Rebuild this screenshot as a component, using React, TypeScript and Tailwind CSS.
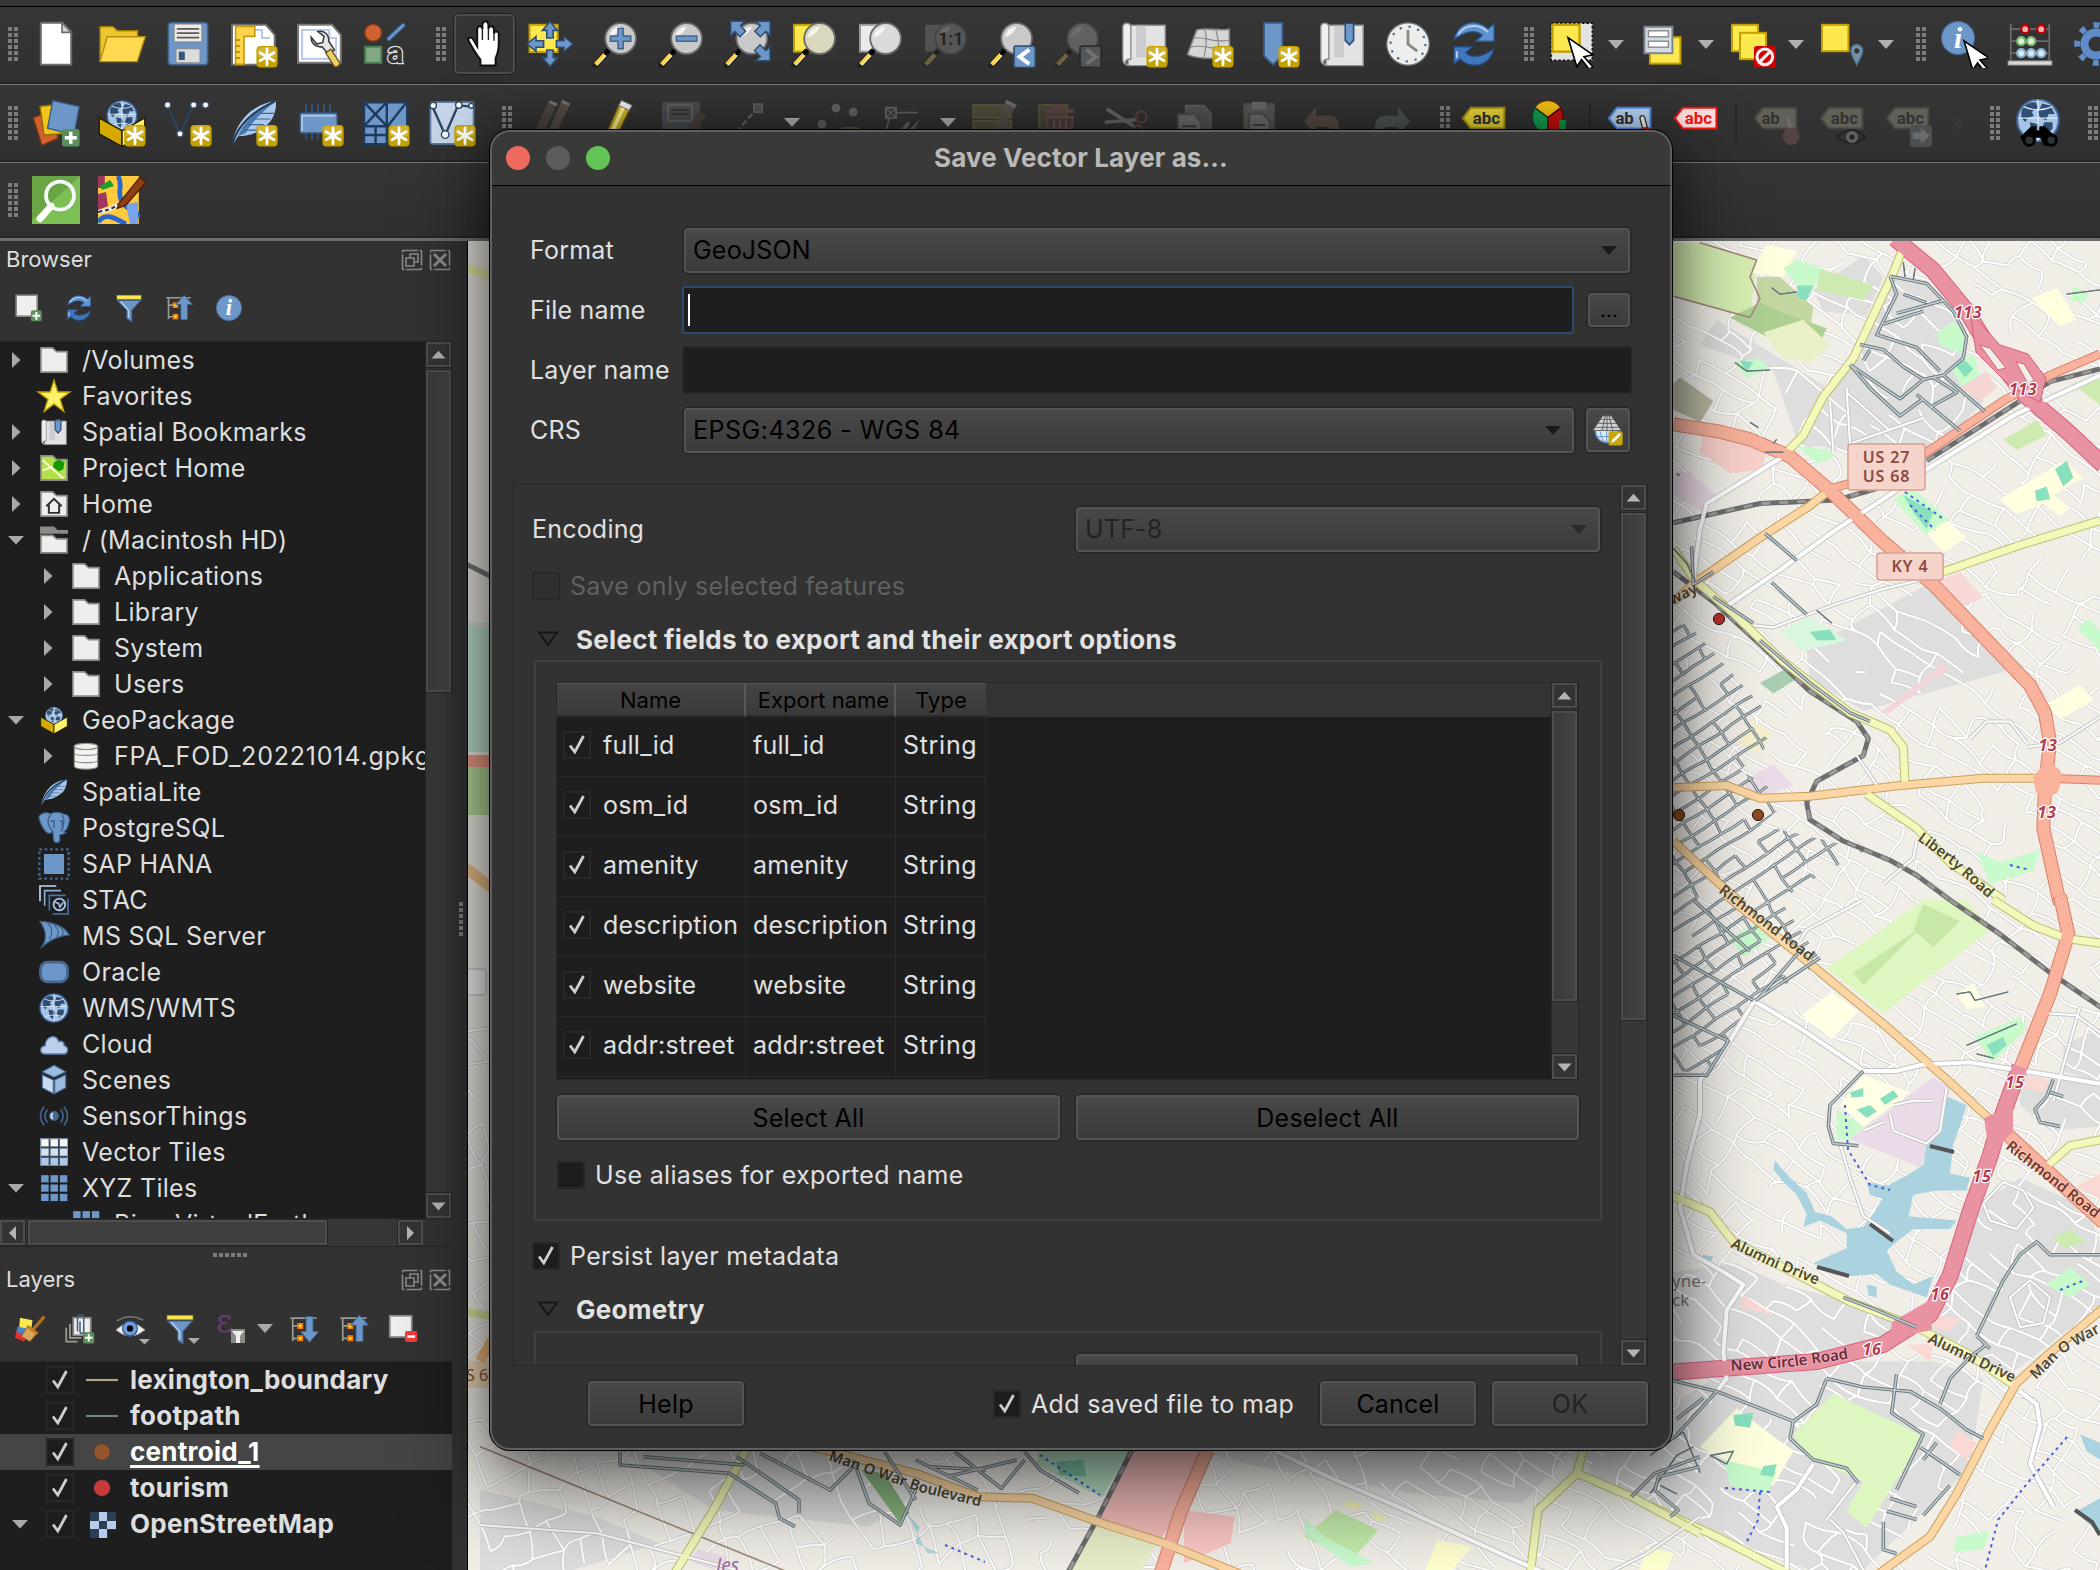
import React from "react";

type Kids = { children?: React.ReactNode };

/* ------------------------------------------------------------------ */
/* Icon helpers                                                        */
/* ------------------------------------------------------------------ */

const BLUE = "#6d97c8";
const NAVY = "#2f4e72";

function Svg({ children, size = 48, dim = false }: Kids & { size?: number; dim?: boolean }) {
  return (
    <svg width={size} height={size} viewBox="0 0 24 24" className={dim ? "block shrink-0 opacity-30" : "block shrink-0"}>
      {children}
    </svg>
  );
}

function Star() {
  return (
    <g>
      <rect x="13.2" y="13" width="10.6" height="10.8" rx="2" fill="#c4a000" />
      <rect x="13.8" y="13.6" width="9.4" height="5" rx="1.4" fill="#d3b431" />
      <path d="M18.5 14.4v8M15 16.4l7 4M22 16.4l-7 4" stroke="#fff" strokeWidth="1.4" strokeLinecap="round" />
    </g>
  );
}

function Lens({ fill = "#c9c9c9", x = 0 }: { fill?: string; x?: number }) {
  return (
    <g transform={`translate(${x} 0)`}>
      <path d="M1.6 22.6 7.6 16" stroke="#222" strokeWidth="3.2" strokeLinecap="round" />
      <path d="M1.8 22.2 6.4 17.2" stroke="#fcd24a" strokeWidth="2" />
      <path d="M2.6 22.6 7 17.8" stroke="#fff3c0" strokeWidth=".6" />
      <path d="M7 16.6 9.5 14" stroke="#000" strokeWidth="1.8" strokeLinecap="round" />
      <circle cx="14.3" cy="9.3" r="7.7" fill={fill} stroke="#6a6a6a" strokeWidth=".9" />
      <path d="M8.4 8.5a6 6 0 0 1 6-5.3c-1.4 2.8-3 4.6-6 5.3z" fill="#fff" opacity=".75" />
    </g>
  );
}

function Pointer({ x = 0, y = 0 }: { x?: number; y?: number }) {
  return (
    <path
      transform={`translate(${x} ${y})`}
      d="M0 0 12.5 8.6 8 9.6 12.4 14.6 10.6 15.9 6.8 11 4.4 14.6z"
      fill="#fff"
      stroke="#000"
      strokeWidth=".8"
    />
  );
}

function GlobeArt({ cx = 12, cy = 12, r = 10 }: { cx?: number; cy?: number; r?: number }) {
  const s = r / 10;
  return (
    <g transform={`translate(${cx} ${cy}) scale(${s})`}>
      <circle r="10" fill="#a5c4e8" stroke="#3f6699" strokeWidth="1" />
      <path d="M-8-4C-7-8-3-9-1-8.5L0-6l-3 2 1 2-3 1-1 2-2-2zM-4 1l4 1 1 2-2 4-2-2zM2-8l4 1 2 4-3 0-1 3-3-1-1-3zM3 1l4 0 0 3-3 3-2-3z" fill="#2f4e72" />
      <path d="M-9.6-1h19.2M0-10v20M-7-6.5q7 3 14 0M-7 6.5q7-3 14 0" stroke="#dbe8f7" strokeWidth=".6" fill="none" />
    </g>
  );
}

function RefreshArt() {
  return (
    <g>
      <path d="M2.2 9.5C3.2 4.6 7 1.4 11.5 1.4c3.3 0 5.7 1.3 7.4 3.2L22 2v8.6h-9l3.2-3c-1.2-1.2-2.8-1.8-4.7-1.8-3.3 0-6.3 1.5-9.3 3.7z" fill="#5f92d1" stroke="#2a5b9c" strokeWidth=".6" />
      <path d="M21.8 14.5c-1 4.9-4.8 8.1-9.3 8.1-3.3 0-5.7-1.3-7.4-3.2L2 22v-8.6h9l-3.2 3c1.2 1.2 2.8 1.8 4.7 1.8 3.3 0 6.3-1.5 9.3-3.7z" fill="#3f77bd" stroke="#23508c" strokeWidth=".6" />
      <path d="M4 7.4C6 4.2 9 3 12 3s5 1 7 3" stroke="#b7d0ee" strokeWidth="1" fill="none" />
      <path d="M3.4 15.6 3.4 19" stroke="#b7d0ee" strokeWidth="1" fill="none" />
    </g>
  );
}

function InfoArt({ cx = 12, cy = 12, r = 10 }: { cx?: number; cy?: number; r?: number }) {
  return (
    <g>
      <circle cx={cx} cy={cy} r={r} fill={BLUE} stroke="#4a709c" strokeWidth=".6" />
      <text x={cx} y={cy + r * 0.58} fontSize={r * 1.8} textAnchor="middle" fontStyle="italic" fontWeight="700" fontFamily="'Liberation Serif', serif" fill="#fff">
        i
      </text>
    </g>
  );
}

function QuillArt() {
  return (
    <g>
      <path d="M1 23.5C1.6 18 4 12.6 8 8.4 12 4 17.4 1.8 23 1c.2 5-1.2 9.4-5.2 12.6C14 17 9 18.6 4 18.6z" fill="#a9c8ec" />
      <path d="M23 1C14 5 7 11 4 18.6L8 17c2-4 5-8 15-16z" fill="#4c78ad" />
      <path d="M1 23.5C3 15 9 7 22.6 1.2" stroke="#1d3a5c" strokeWidth="1" fill="none" />
      <path d="M7 15.6h7M9 12.8h8M12 10h8M15 7.2h7" stroke="#3f6699" strokeWidth=".6" />
    </g>
  );
}

function FunnelArt() {
  return (
    <g>
      <path d="M2 5.6h20l-7.6 8.2V24l-4.2-3V13.8z" fill={BLUE} stroke="#41628a" strokeWidth=".9" />
      <path d="M5 6.6 11.6 14v6.4" stroke="#b5cde9" strokeWidth="1.2" fill="none" />
      <rect x="1.6" y="1" width="20.8" height="3.6" fill="#fce94f" stroke="#8d7b1a" strokeWidth=".5" />
    </g>
  );
}

function TreeArrowArt({ up }: { up?: boolean }) {
  return (
    <g>
      <path d="M1 3.2h21M3 3v18.5M3 9.5h5M3 19.5h5" stroke="#9a9a95" strokeWidth="1.4" fill="none" />
      <rect x="6.6" y="7.2" width="4.8" height="4.8" fill="#f57900" />
      <rect x="8" y="8.6" width="2" height="2" fill="#fce94f" />
      <rect x="6.6" y="17" width="4.8" height="4.8" fill="#f57900" />
      <rect x="8" y="18.4" width="2" height="2" fill="#fce94f" />
      {up ? (
        <path d="M16.4 1 23.6 9h-4.4v13h-5.6V9H9.2z" fill={BLUE} stroke="#3f6187" strokeWidth=".8" />
      ) : (
        <path d="M16.4 22.6 23.8 14h-4.6V2h-5.6v12H9.2z" fill={BLUE} stroke="#3f6187" strokeWidth=".8" />
      )}
    </g>
  );
}

function BookArt() {
  return (
    <g>
      <path d="M4 2.6h18.6v20.2H4z" fill="#e3e3e3" stroke="#8d8d8d" strokeWidth=".7" />
      <path d="M8 2.6h5v16H8z" fill="#bcbcc0" opacity=".55" />
      <path d="M1.4 3.6C1.4 1 5.4 1 5.4 3.6v16h-1C2 19.6 2.4 22.8 5 22.8c-2.6 0-3.6-1.4-3.6-3.4z" fill="#f0f0f0" stroke="#8d8d8d" strokeWidth=".7" />
    </g>
  );
}

function BoxGlobe() {
  return (
    <g>
      <GlobeArt cx={12} cy={8.4} r={7.4} />
      <path d="M.6 9.4 12 15.8v8L.6 17.4z" fill="#d4a900" stroke="#211a00" strokeWidth=".7" />
      <path d="M23.4 9.4 12 15.8v8l11.4-6.4z" fill="#fdf36b" stroke="#211a00" strokeWidth=".7" />
    </g>
  );
}

function Tag({ text, fill, stroke, color = "#333" }: { text: string; fill: string; stroke: string; color?: string }) {
  return (
    <g>
      <path d="M1.4 9.6 5.4 4.4h16.8v10.4H5.4z" fill={fill} stroke={stroke} strokeWidth="1" />
      <text x={text === "ab" ? 9.3 : 13.2} y="12.6" fontSize="8.4" textAnchor="middle" fontWeight="700" fontFamily="Roboto, sans-serif" fill={color}>
        {text}
      </text>
    </g>
  );
}

/* ------------------------------------------------------------------ */
/* Toolbar icons                                                       */
/* ------------------------------------------------------------------ */

const I = {
  newFile: (
    <Svg>
      <path d="M4.4 1.4h10.8l4.4 4.6v16.4H4.4z" fill="#fff" stroke="#6b6b6b" strokeWidth="1" />
      <path d="M15 1.4V6.2h4.6z" fill="#d5d5d5" stroke="#6b6b6b" strokeWidth=".8" />
    </Svg>
  ),
  folder: (
    <Svg>
      <path d="M1 20.6V3.4h6.4L9.8 5.4h10v4" fill="#edc62d" stroke="#a4800a" strokeWidth=".7" />
      <path d="M1 20.8 4.6 8.4h19L19.6 20.8z" fill="#ffd950" stroke="#b58e12" strokeWidth=".7" />
    </Svg>
  ),
  save: (
    <Svg>
      <rect x="2.2" y="1.4" width="19.6" height="21" rx="1.6" fill={BLUE} stroke="#45668f" strokeWidth=".8" />
      <rect x="5" y="2" width="14" height="9" rx=".8" fill="#eceae6" stroke="#7a7a7a" strokeWidth=".5" />
      <path d="M6.4 4.4h11.2M6.4 6.6h11.2M6.4 8.8h11.2" stroke="#5a5a5a" strokeWidth=".9" />
      <rect x="6" y="14.4" width="12" height="7" fill="#dcdcda" stroke="#8a8a8a" strokeWidth=".5" />
      <rect x="7.4" y="15.8" width="3" height="4.2" fill="#34567f" />
    </Svg>
  ),
  layout: (
    <Svg>
      <path d="M1 2.4h17l4.4 5v15H1z" fill="#fff" stroke="#6b6b6b" strokeWidth="1" />
      <path d="M3 5h13v4h4" fill="none" stroke="#b6c9ec" strokeWidth="1" />
      <path d="M2.8 3.2h9.6v5H7v14H2.8z" fill="#ffd44b" stroke="#c29a10" strokeWidth=".8" />
      <path d="M3 10h2M3 13h2M3 16h2M3 19h2" stroke="#a17c00" strokeWidth=".7" />
      <Star />
    </Svg>
  ),
  wrench: (
    <Svg>
      <path d="M1 2.4h17l4.4 5v14H1z" fill="#fff" stroke="#777" strokeWidth="1" />
      <path d="M3 5h13.6v4H20v10.4H3z" fill="none" stroke="#b9cbee" strokeWidth="1.1" />
      <path d="M7.6 8.6 10.4 12l3-.8.6-3-3-2.4c3-.8 5.6 1.400 5.400 4.800l2.800 4.400-3 2-3.200-3.600c-3 .4-5.400-1.600-5.400-4.800z" fill="#e4e4e4" stroke="#3c3c3c" strokeWidth=".8" />
      <path d="M14.8 16.4 17.4 14.600 22 21.600c-.4 1.600-2 2.200-3 1.400z" fill="#e8cf6b" stroke="#6e5a16" strokeWidth=".7" />
    </Svg>
  ),
  style: (
    <Svg>
      <ellipse cx="5.6" cy="6.4" rx="4.2" ry="4.2" fill="#cf6230" stroke="#8c3d17" strokeWidth=".7" />
      <path d="M13.4 9.4 20.6 2.6" stroke="#34567f" strokeWidth="2.6" strokeLinecap="round" />
      <path d="M13.4 9.4 20.6 2.6" stroke={BLUE} strokeWidth="1.4" strokeLinecap="round" />
      <rect x="1.6" y="13.4" width="8" height="8" fill="#83a883" stroke="#4c8353" strokeWidth="1" />
      <text x="16.6" y="21.6" fontSize="15" textAnchor="middle" fontFamily="Roboto, sans-serif" fontWeight="700" fill="#333" stroke="#dedede" strokeWidth="1.3" paintOrder="stroke">
        a
      </text>
    </Svg>
  ),
  hand: (
    <Svg>
      <path
        d="M8.6 13.2V4.6c0-2 2.4-2 2.6 0V2.4c0-2.4 3-2.4 3 0v2c.2-1.8 2.6-1.6 2.8.2v2.2c.2-1.6 2.4-1.4 2.4.4 0 5 .2 8.2-1.6 12v3.6H10.2v-3C8 17 6 13.6 4.4 10.6c-.8-1.8.8-2.4 2-1.2z"
        fill="#fff"
        stroke="#111"
        strokeWidth="1"
      />
      <path d="M11.2 10V4M14.2 10V4.4M17 10.4V6.4" stroke="#222" strokeWidth=".7" />
    </Svg>
  ),
  panSel: (
    <Svg>
      <rect x="1.8" y="2.4" width="14" height="13.6" fill="#fce94f" stroke="#c4a000" strokeWidth="1" />
      <path d="M12 .8 15.8 5.2H13.6V9h-3.2V5.2H8.2zM12 23.2 15.8 18.8H13.6V15h-3.2v3.8H8.2zM.6 12 5 8.2v2.2h3.8v3.2H5v2.2zM23.4 12 19 8.2v2.2h-3.8v3.2H19v2.2z" fill={BLUE} stroke={NAVY} strokeWidth=".8" />
    </Svg>
  ),
  zoomIn: (
    <Svg>
      <Lens />
      <path d="M13 4.2h2.6V8h3.8v2.6h-3.8v3.8H13v-3.8H9.2V8H13z" fill={BLUE} stroke="#41628a" strokeWidth=".7" />
    </Svg>
  ),
  zoomOut: (
    <Svg>
      <Lens />
      <rect x="9.2" y="8" width="10.2" height="2.6" fill={BLUE} stroke="#41628a" strokeWidth=".7" />
    </Svg>
  ),
  zoomFull: (
    <Svg>
      <Lens x={-0.4} />
      <path d="M3.4.6h7L8.2 2.8l2.6 2.8-2.8 2.8L5.4 5.6 3.4 7.800zM23 .6h-7l2.2 2.2-2.8 2.8 2.8 2.8L21 5.600l2 2.200zM23 20.400h-7l2.200-2.200-3-3 2.800-2.800 3 3 2-2.200z" fill={BLUE} stroke={NAVY} strokeWidth=".7" />
    </Svg>
  ),
  zoomSel: (
    <Svg>
      <rect x="2" y="2.4" width="11" height="13.4" fill="#fce94f" stroke="#c4a000" strokeWidth="1" />
      <Lens fill="#d9d7bc" x={0.5} />
    </Svg>
  ),
  zoomLayer: (
    <Svg>
      <rect x="2" y="2.4" width="11" height="13.4" fill="#ebebeb" stroke="#999" strokeWidth="1" />
      <Lens fill="#dadada" x={0.5} />
    </Svg>
  ),
  zoomNative: (
    <Svg dim>
      <rect x="1.6" y="2.4" width="11" height="13.4" fill="#999" />
      <Lens fill="#a9a9a9" />
      <text x="14.4" y="12.6" fontSize="9" textAnchor="middle" fontWeight="700" fontFamily="Roboto, sans-serif" fill="#000">
        1:1
      </text>
    </Svg>
  ),
  zoomLast: (
    <Svg>
      <Lens />
      <rect x="13" y="13" width="10.6" height="10.8" rx="1" fill={BLUE} stroke="#2c4c75" strokeWidth=".8" />
      <path d="M20.6 14.8 15.8 18.4 20.6 22" stroke="#fff" strokeWidth="2" fill="none" />
    </Svg>
  ),
  zoomNext: (
    <Svg dim>
      <Lens />
      <rect x="13" y="13" width="10.6" height="10.8" rx="1" fill="#9aa5b5" stroke="#111" strokeWidth=".8" />
      <path d="M16.2 14.8 21 18.4 16.2 22" stroke="#fff" strokeWidth="2" fill="none" />
    </Svg>
  ),
  newMap: (
    <Svg>
      <BookArt />
      <Star />
    </Svg>
  ),
  new3d: (
    <Svg>
      <path d="M5.4 5C10 3.6 16 5.6 21.6 4.6L21.8 20C16 18 7 20.6.8 17.2z" fill="#d6d6d6" stroke="#888" strokeWidth=".8" />
      <path d="M9 4.4c2 4 1 9 0 14M15 5c1 4 2 10 1 14M4 9c6-1 10 3 18 1M2 13.6c7-2 12 2 20 1" stroke="#8a8a8a" strokeWidth=".6" fill="none" />
      <Star />
    </Svg>
  ),
  newBookmark: (
    <Svg>
      <path d="M6 1.4h9.2v16L10.6 22.4 6 18z" fill={BLUE} stroke="#3b5d89" strokeWidth=".9" />
      <Star />
    </Svg>
  ),
  bookmarks: (
    <Svg>
      <BookArt />
      <path d="M13.6 1.6h4.2v8.6l-2.1 2.2-2.1-2.2z" fill={BLUE} stroke="#2c4c75" strokeWidth=".8" />
    </Svg>
  ),
  clock: (
    <Svg>
      <circle cx="12" cy="12" r="10.6" fill="#eeeeec" stroke="#777" strokeWidth=".6" />
      <circle cx="12" cy="12" r="8.7" fill="none" stroke="#41688f" strokeWidth="1.1" strokeDasharray="1.1 3.456" />
      <path d="M12 5v7l4.6 3.6" stroke="#8a8a82" strokeWidth="1.4" fill="none" />
    </Svg>
  ),
  refresh: (
    <Svg>
      <RefreshArt />
    </Svg>
  ),
  select: (
    <Svg>
      <rect x="1.6" y="1.6" width="20.6" height="18.6" fill="#e2e2e0" stroke="#111" strokeWidth=".9" strokeDasharray="1.2 1" />
      <rect x="2.2" y="2.4" width="13.6" height="13.4" fill="#fce94f" stroke="#c4a000" strokeWidth="1.2" />
      <Pointer x={10} y={8.8} />
    </Svg>
  ),
  selectForm: (
    <Svg>
      <rect x="6" y="8.6" width="15.2" height="13.2" fill="#fce94f" stroke="#c4a000" strokeWidth="1" />
      <rect x="3.2" y="3.4" width="14" height="13.2" fill="#d7dde7" stroke="#7d8590" strokeWidth="1" />
      <rect x="5.2" y="5.4" width="10" height="3" fill="#fff" stroke="#888" strokeWidth=".7" />
      <rect x="5.2" y="10.6" width="10" height="3" fill="#fff" stroke="#888" strokeWidth=".7" />
    </Svg>
  ),
  deselect: (
    <Svg>
      <rect x="2" y="2.4" width="13" height="13.2" fill="#fce94f" stroke="#c4a000" strokeWidth="1" />
      <rect x="6" y="6.4" width="13" height="13.2" fill="#fce94f" stroke="#c4a000" strokeWidth="1" />
      <rect x="13" y="13" width="10.8" height="10.8" rx="1.4" fill="#d40000" />
      <circle cx="18.4" cy="18.4" r="3.9" fill="none" stroke="#eee" strokeWidth="1.6" />
      <path d="M15.8 21 21 15.8" stroke="#eee" strokeWidth="1.6" />
    </Svg>
  ),
  selectLoc: (
    <Svg>
      <rect x="2" y="2.4" width="13.2" height="13.2" fill="#fce94f" stroke="#c4a000" strokeWidth="1" />
      <path d="M19.4 22.6C17.4 18.6 16.4 17 16.4 15.2a3 3 0 0 1 6 0c0 1.8-1 3.4-3 7.4z" fill="#7291a8" stroke="#4e6a80" strokeWidth=".7" />
      <circle cx="19.4" cy="15.4" r="1.3" fill="#333" />
    </Svg>
  ),
  identify: (
    <Svg>
      <InfoArt cx={9} cy={9} r={8.2} />
      <Pointer x={12} y={10.4} />
    </Svg>
  ),
  abacus: (
    <Svg>
      <path d="M2.4 2v18M21.6 2v18M2.4 4.6h19.2M2.4 10.6h19.2M2.4 16.6h19.2" stroke="#6a6a6a" strokeWidth=".9" />
      <rect x="1" y="20.4" width="22" height="2.2" fill="#d8d8d8" stroke="#777" strokeWidth=".5" />
      <g strokeWidth="1.1">
        <circle cx="9.6" cy="4.6" r="2" fill="#f0b0b0" stroke="#b00" />
        <circle cx="17.6" cy="4.6" r="2" fill="#f0b0b0" stroke="#b00" />
        <circle cx="7.6" cy="10.6" r="2" fill="#d8f5d0" stroke="#7cb574" />
        <circle cx="12.6" cy="10.6" r="2" fill="#d8f5d0" stroke="#7cb574" />
        <circle cx="7.6" cy="16.6" r="2" fill="#d7e9f5" stroke="#88b1cc" />
        <circle cx="12.6" cy="16.6" r="2" fill="#d7e9f5" stroke="#88b1cc" />
        <circle cx="17.6" cy="16.6" r="2" fill="#d7e9f5" stroke="#88b1cc" />
      </g>
    </Svg>
  ),
  gear: (
    <Svg>
      <circle cx="12" cy="12" r="9.4" fill="none" stroke="#5d8cc9" strokeWidth="3" strokeDasharray="3 4.38" strokeDashoffset="1.5" />
      <circle cx="12" cy="12" r="5.8" fill="none" stroke="#5d8cc9" strokeWidth="4" />
    </Svg>
  ),
  dataSource: (
    <Svg>
      <path d="M.6 9.4 9 6l4 13.6-8 3.6z" fill="#cf6230" stroke="#84350f" strokeWidth=".7" />
      <path d="M4 3.6 14 2.6l1 14.8-9 .6z" fill="#f3c518" stroke="#8f6e00" strokeWidth=".7" />
      <path d="M10.4.8 23.6 3.8 21 18 7.8 14.6z" fill={BLUE} stroke="#3a5c88" strokeWidth=".7" />
      <rect x="15" y="15" width="8.8" height="8.8" rx="1.4" fill="#5b8e5d" />
      <path d="M19.4 16.4v6M16.4 19.4h6" stroke="#fff" strokeWidth="1.7" />
    </Svg>
  ),
  geopackage: (
    <Svg>
      <BoxGlobe />
      <Star />
    </Svg>
  ),
  shapefile: (
    <Svg>
      <path d="M1.8 3 8 17.6 14.8 3H20.6" fill="none" stroke="#2b4059" strokeWidth="1.3" />
      <g fill="#fff" stroke="#445a75" strokeWidth=".6">
        <circle cx="1.8" cy="3" r="1.5" />
        <circle cx="8" cy="17.4" r="1.5" />
        <circle cx="14.8" cy="3" r="1.5" />
        <circle cx="20.8" cy="3" r="1.5" />
      </g>
      <Star />
    </Svg>
  ),
  spatialite: (
    <Svg>
      <QuillArt />
      <Star />
    </Svg>
  ),
  memory: (
    <Svg>
      <path d="M5 7V2.6M8 7V2.6M11 7V2.6M14 7V2.6M17 7V2.6M5 16v4.2M8 16v4.2M11 16v4.2M14 16v4.2" stroke="#34567f" strokeWidth=".9" />
      <rect x="2" y="7" width="18.6" height="10" rx="1" fill={BLUE} stroke="#34567f" strokeWidth=".8" />
      <path d="M3 16V8.4h16.6" stroke="#a8c3e4" strokeWidth="1" fill="none" />
      <Star />
    </Svg>
  ),
  mesh: (
    <Svg>
      <path d="M1 1.6h21.6v12H12.4v9H1z" fill={BLUE} stroke="#1e3a5c" strokeWidth="1.2" />
      <path d="M1 13.6h21M12.4 1.6v12M1 1.6l11.4 12M12.4 1.6 1 13.6M22 2 13 13.4M6.8 14v8.6M1 18h11.4" stroke="#1e3a5c" strokeWidth="1.2" fill="none" />
      <Star />
    </Svg>
  ),
  virtual: (
    <Svg>
      <rect x="1.2" y="1.6" width="21.6" height="20.8" rx="1" fill="#c7d6ea" stroke="#5b7ba5" strokeWidth=".9" />
      <path d="M2 3.2 8.6 18 15 3.2l7 .6" fill="none" stroke="#2e4763" strokeWidth="1.2" />
      <g fill="#fff" stroke="#2e4763" strokeWidth=".7">
        <circle cx="2.6" cy="3.2" r="1.6" />
        <circle cx="8.6" cy="17.8" r="1.9" />
        <circle cx="15.4" cy="3" r="1.6" />
        <circle cx="21.6" cy="3.4" r="1.2" />
      </g>
      <Star />
    </Svg>
  ),
  pencils: (
    <Svg dim>
      <path d="M3 19 11 1.6 15 3.2 7 21z" fill="#8a7062" />
      <path d="M10 19 17.4 1.6 21.6 3.6 13 21z" fill="#a08373" />
      <path d="m11 1.6 1-1 4 1.8-1 1.2zM17.4 1.6l.8-1.2L22 2.2l-.6 1.4z" fill="#fff" />
    </Svg>
  ),
  pencil: (
    <Svg>
      <path d="M6 20 13.4 3.2 18.6 5.6 10.6 22z" fill="#c9b52a" stroke="#6e6110" strokeWidth=".7" />
      <path d="M9 18.6 15.6 4.4" stroke="#fbf38a" strokeWidth="1.8" />
      <path d="m13.4 3.2 1.4-2.4 5.2 2.4-1.4 2.4z" fill="#eee" stroke="#888" strokeWidth=".5" />
    </Svg>
  ),
  saveEdits: (
    <Svg dim>
      <rect x="2" y="1.4" width="19" height="21" rx="1.6" fill="#7d8896" />
      <rect x="5" y="3" width="12" height="8" fill="#888" stroke="#ccc" strokeWidth=".8" />
      <path d="M6.4 5.4h9M6.4 7.6h9" stroke="#333" strokeWidth=".9" />
      <path d="M12 20 20 6l4 2-8 14z" fill="#80604e" />
    </Svg>
  ),
  digitize: (
    <Svg dim>
      <path d="M3 20 16.4 5" stroke="#ccc" strokeWidth="1.2" strokeDasharray="3 1.6" />
      <rect x="15" y="2.6" width="4" height="4" fill="#888" stroke="#bbb" />
    </Svg>
  ),
  addPoint: (
    <Svg dim>
      <circle cx="11" cy="4.6" r="2.2" fill="#ccc" />
      <circle cx="19.6" cy="6.6" r="2.2" fill="#ccc" />
      <circle cx="4" cy="12.6" r="2.2" fill="#ccc" />
      <rect x="13" y="14" width="10" height="9" rx="2" fill="#a79a50" />
    </Svg>
  ),
  vertex: (
    <Svg dim>
      <rect x="3" y="4.4" width="5" height="5" fill="none" stroke="#ccc" />
      <path d="M3.4 5 7.6 9M7.6 5 3.4 9M8 6.8h11M4.6 9.6 2 20" stroke="#ccc" strokeWidth=".8" />
      <path d="M7 19 14 11l1 1-4 7zM12 18l8-8-5 9z" fill="#ccc" />
    </Svg>
  ),
  editForm: (
    <Svg dim>
      <rect x="1.6" y="3" width="19" height="6.4" fill="#8f874a" stroke="#b3a860" />
      <rect x="1.6" y="11" width="19" height="6.4" fill="#8f874a" stroke="#b3a860" />
      <path d="M10 20 17.4 2l5 2.4L14 22z" fill="#a88c7e" />
      <path d="m17.4 2 1-1.6 5 2.6-1 1.6z" fill="#eee" />
    </Svg>
  ),
  trash: (
    <Svg dim>
      <rect x="1.6" y="3" width="14" height="14" fill="#7d7440" stroke="#a59a50" />
      <path d="M4 6h15M8 3.6h6" stroke="#c07070" strokeWidth="2" />
      <path d="M5.4 9h13L17.4 22h-11z" fill="#8a5050" stroke="#c58a8a" />
      <path d="M9 11v8M12 11v8M15 11v8" stroke="#d0b0b0" />
    </Svg>
  ),
  cut: (
    <Svg dim>
      <path d="M2.4 5 16 13.6M1.4 11.6 17 10.4" stroke="#ddd" strokeWidth="1.8" />
      <circle cx="19.6" cy="9" r="2.8" fill="none" stroke="#c66" strokeWidth="1" />
      <circle cx="18" cy="16" r="2.6" fill="none" stroke="#c66" strokeWidth="1" />
    </Svg>
  ),
  copy: (
    <Svg dim>
      <path d="M9 3.4h9l3.4 4v14H9z" fill="#999" stroke="#bbb" />
      <path d="M5 7.6h8l3.6 4v12H5z" fill="#eee" stroke="#888" />
      <path d="M7 13.6h7M7 16h7" stroke="#555" />
    </Svg>
  ),
  paste: (
    <Svg dim>
      <rect x="5" y="2.6" width="15" height="20" fill="#aaa" stroke="#a88a70" />
      <rect x="9" y="1.4" width="7" height="4" fill="#ddd" />
      <path d="M7.6 7.4h7l3.4 4v11H7.6z" fill="#eee" stroke="#888" />
      <path d="M9.6 13h6M9.6 15.6h6" stroke="#555" />
    </Svg>
  ),
  undo: (
    <Svg dim>
      <path d="M2 11.4 8 4v4.4h7c4 0 5 4 5 12h-4c0-6-1-6.4-3-6.4H8v4z" fill="#a88070" />
    </Svg>
  ),
  redo: (
    <Svg dim>
      <path d="M22 11.4 16 4v4.4H9c-4 0-5 4-5 12h4c0-6 1-6.4 3-6.4h5v4z" fill="#8aa094" />
    </Svg>
  ),
  labels: (
    <Svg>
      <Tag text="abc" fill="#e8d437" stroke="#a68e07" />
    </Svg>
  ),
  pie: (
    <Svg>
      <path d="M11 9 4.6 4.2A7.600 7.600 0 0 1 17.200 4.200z" fill="#f5c211" stroke="#7a2b00" strokeWidth=".5" />
      <path d="M11 9.200 4.400 4.600A8.600 8.600 0 0 0 11 17.600z" fill="#12a150" stroke="#064d22" strokeWidth=".6" />
      <path d="M11 9.200 17.400 4.600A8.600 8.600 0 0 1 11 17.600z" fill="#c80f0f" stroke="#520000" strokeWidth=".6" />
      <rect x="16.6" y="10.4" width="3.2" height="9" fill="#0c9a46" />
    </Svg>
  ),
  pinLabel: (
    <Svg>
      <Tag text="ab" fill="#b9d4f5" stroke="#4b8ee6" />
      <path d="M18.2 9.6 19.6 15" stroke="#222" strokeWidth="3" strokeLinecap="round" />
      <path d="M18.2 9.6 19.6 15" stroke="#eee" strokeWidth="1.8" strokeLinecap="round" />
      <circle cx="20" cy="18" r="4" fill="#b01717" />
    </Svg>
  ),
  redLabel: (
    <Svg>
      <Tag text="abc" fill="#ffdede" stroke="#f21414" color="#f21414" />
    </Svg>
  ),
  dimPin: (
    <Svg dim>
      <Tag text="ab" fill="#c9c8b0" stroke="#77735a" />
      <path d="M18 9.6 19.6 16" stroke="#eee" strokeWidth="1.8" />
      <ellipse cx="19.6" cy="18.6" rx="4.2" ry="4.4" fill="#a56b6b" />
    </Svg>
  ),
  dimEye: (
    <Svg dim>
      <Tag text="abc" fill="#c9c8b0" stroke="#77735a" />
      <path d="M9.600 19q7-7 14 0-7 6-14 0z" fill="#333" stroke="#000" />
      <circle cx="17" cy="19" r="3" fill="#ccc" />
      <circle cx="17" cy="19" r="1.3" fill="#000" />
    </Svg>
  ),
  dimMove: (
    <Svg dim>
      <Tag text="abc" fill="#c9c8b0" stroke="#77735a" />
      <rect x="13" y="13" width="11" height="11" rx="1.6" fill="#8a949e" />
      <path d="M14.4 16.8h4v-2.4l4.6 4-4.6 4V20h-4z" fill="#eee" />
    </Svg>
  ),
  metasearch: (
    <Svg>
      <GlobeArt cx={12} cy={10.6} r={10.4} />
      <path d="M8.6 13.6h2.6v2h1.6v-2h2.6l5.6 5.4-3 4.4h-3l-2-4h-2l-2 4h-3l-3-4.4z" fill="#000" />
      <circle cx="7.6" cy="20.6" r="2.6" fill="#2e3236" stroke="#000" strokeWidth="1.4" />
      <circle cx="18.6" cy="20.6" r="2.6" fill="#2e3236" stroke="#000" strokeWidth="1.4" />
    </Svg>
  ),
  quickOsm: (
    <Svg>
      <rect width="24" height="24" fill="#7cbf55" />
      <path d="M0 0h24L0 22z" fill="#6aa545" />
      <path d="M9.6 15 4 21.4" stroke="#fff" strokeWidth="3.4" strokeLinecap="round" />
      <circle cx="14" cy="9.8" r="7" fill="none" stroke="#f6f8fb" strokeWidth="1.9" />
    </Svg>
  ),
  osmTools: (
    <Svg>
      <rect width="20.4" height="24" fill="#ffcb3d" />
      <path d="M0 0h3.4v6H0zM0 9l4-1 1 7-5 2z" fill="#a0375f" />
      <path d="M1 5l5-3 2 3-6 2z" fill="#17a127" />
      <path d="M10 0c3 5-1 8 2 13s8 3 8 8M0 23c4-5 8-2 14 1" stroke="#2b66cf" strokeWidth="2.4" fill="none" />
      <path d="M14 14l6-1v11h-4z" fill="#7ba3ec" />
      <path d="M0 18c4-1 7-1 10-4" stroke="#eee" strokeWidth="2" fill="none" />
      <path d="M0 18c4-1 7-1 10-4" stroke="#333" strokeWidth="1" fill="none" strokeDasharray="2 1.5" />
      <path d="M10.6 13.4 21 .6 24 3 14 14.6l-4.4 1.6z" fill="#8c3f14" stroke="#4e1f05" strokeWidth=".6" />
    </Svg>
  ),
};

/* ------------------------------------------------------------------ */
/* Toolbar pieces                                                      */
/* ------------------------------------------------------------------ */

function Dots({ n, layout = "double" }: { n: number; layout?: "double" | "column" | "row" }) {
  const count = layout === "double" ? n * 2 : n;
  const box = {
    double: "grid w-[10px] grid-cols-2 gap-[2px]",
    column: "flex flex-col gap-[2px]",
    row: "flex gap-[2px]",
  }[layout];
  return (
    <div className={box}>
      {Array.from({ length: count }, (_, c) => (
        <span key={c} className="size-[4px] bg-[#7c7c7c]" />
      ))}
    </div>
  );
}

function Handle({ first = false }: { first?: boolean }) {
  return (
    <div className={first ? "flex w-[23px] shrink-0 items-center pl-[8px]" : "flex w-[32px] shrink-0 items-center pl-[17px]"}>
      <Dots n={6} />
    </div>
  );
}

function Tool({ children, active = false }: Kids & { active?: boolean }) {
  return (
    <div className="flex w-[66px] shrink-0 items-center justify-center">
      {active ? (
        <div className="flex h-[60px] w-[61px] items-center justify-center rounded-[5px] border-2 border-[#4c4c4c] bg-[#343434] shadow-[0_0_0_1px_#1f1f1f]">
          {children}
        </div>
      ) : (
        children
      )}
    </div>
  );
}

function Caret({ className = "" }: { className?: string }) {
  return (
    <svg width="16" height="9" viewBox="0 0 16 9" className={className}>
      <path d="M0 0h16L8 9z" fill="currentColor" />
    </svg>
  );
}

function DropCaret() {
  return (
    <div className="flex w-[24px] shrink-0 items-center justify-center pr-[3px] text-[#b0b0b0]">
      <Caret />
    </div>
  );
}

function Sep() {
  return (
    <div className="flex w-[14px] shrink-0 items-center justify-center">
      <span className="h-[38px] w-[2px] bg-[#282828]" />
    </div>
  );
}

function Toolbars() {
  return (
    <div className="flex h-[241px] w-full shrink-0 flex-col overflow-hidden bg-[#323232]">
      <div className="h-[7px] shrink-0 border-b border-black bg-[#373737]" />
      <div className="flex h-[78px] shrink-0 border-b border-[#777] bg-linear-to-b from-[#363636] to-[#303030] pb-[3px] shadow-[inset_0_-2px_0_#262626]">
        <Handle first />
        <Tool>{I.newFile}</Tool>
        <Tool>{I.folder}</Tool>
        <Tool>{I.save}</Tool>
        <Tool>{I.layout}</Tool>
        <Tool>{I.wrench}</Tool>
        <Tool>{I.style}</Tool>
        <Handle />
        <Tool active>{I.hand}</Tool>
        <Tool>{I.panSel}</Tool>
        <Tool>{I.zoomIn}</Tool>
        <Tool>{I.zoomOut}</Tool>
        <Tool>{I.zoomFull}</Tool>
        <Tool>{I.zoomSel}</Tool>
        <Tool>{I.zoomLayer}</Tool>
        <Tool>{I.zoomNative}</Tool>
        <Tool>{I.zoomLast}</Tool>
        <Tool>{I.zoomNext}</Tool>
        <Tool>{I.newMap}</Tool>
        <Tool>{I.new3d}</Tool>
        <Tool>{I.newBookmark}</Tool>
        <Tool>{I.bookmarks}</Tool>
        <Tool>{I.clock}</Tool>
        <Tool>{I.refresh}</Tool>
        <Handle />
        <Tool>{I.select}</Tool>
        <DropCaret />
        <Tool>{I.selectForm}</Tool>
        <DropCaret />
        <Tool>{I.deselect}</Tool>
        <DropCaret />
        <Tool>{I.selectLoc}</Tool>
        <DropCaret />
        <Handle />
        <Tool>{I.identify}</Tool>
        <Tool>{I.abacus}</Tool>
        <Tool>{I.gear}</Tool>
      </div>
      <div className="flex h-[78px] shrink-0 border-b border-[#777] bg-linear-to-b from-[#353535] to-[#303030] pb-[2px] shadow-[inset_0_-2px_0_#262626]">
        <Handle first />
        <Tool>{I.dataSource}</Tool>
        <Tool>{I.geopackage}</Tool>
        <Tool>{I.shapefile}</Tool>
        <Tool>{I.spatialite}</Tool>
        <Tool>{I.memory}</Tool>
        <Tool>{I.mesh}</Tool>
        <Tool>{I.virtual}</Tool>
        <Handle />
        <Tool>{I.pencils}</Tool>
        <Tool>{I.pencil}</Tool>
        <Tool>{I.saveEdits}</Tool>
        <Tool>{I.digitize}</Tool>
        <DropCaret />
        <Tool>{I.addPoint}</Tool>
        <Tool>{I.vertex}</Tool>
        <DropCaret />
        <Tool>{I.editForm}</Tool>
        <Tool>{I.trash}</Tool>
        <Tool>{I.cut}</Tool>
        <Tool>{I.copy}</Tool>
        <Tool>{I.paste}</Tool>
        <Tool>{I.undo}</Tool>
        <Tool>{I.redo}</Tool>
        <Handle />
        <div className="-ml-[4px] flex">
          <Tool>{I.labels}</Tool>
          <Tool>{I.pie}</Tool>
        </div>
        <Sep />
        <Tool>{I.pinLabel}</Tool>
        <Tool>{I.redLabel}</Tool>
        <Sep />
        <Tool>{I.dimPin}</Tool>
        <Tool>{I.dimEye}</Tool>
        <Tool>{I.dimMove}</Tool>
        <div className="flex w-[32px] shrink-0 items-center justify-center text-[24px] text-[#3c3c3c]">»</div>
        <Handle />
        <Tool>{I.metasearch}</Tool>
        <Handle />
      </div>
      <div className="flex h-[78px] shrink-0 border-b-[3px] border-[#6e6e6e] bg-linear-to-b from-[#353535] to-[#303030] pb-px shadow-[inset_0_-2px_0_#262626]">
        <Handle first />
        <Tool>{I.quickOsm}</Tool>
        <Tool>{I.osmTools}</Tool>
      </div>
    </div>
  );
}

/* ------------------------------------------------------------------ */
/* Scroll bars                                                         */
/* ------------------------------------------------------------------ */

function StepButton({ dir }: { dir: "up" | "down" | "left" | "right" }) {
  const d = {
    up: "M4 16h16l-8-9z",
    down: "M4 8h16l-8 9z",
    left: "M16 4v16l-8-8z",
    right: "M8 4v16l8-8z",
  }[dir];
  return (
    <div className="flex size-[25px] shrink-0 items-center justify-center border-2 border-[#4d4d4d] bg-[#343434] shadow-[0_0_0_1px_#262626]">
      <svg width="22" height="22" viewBox="0 0 24 24">
        <path d={d} fill="#b4b4b4" />
      </svg>
    </div>
  );
}

function VScroll({ thumb }: { thumb: number }) {
  return (
    <div className="flex w-[27px] shrink-0 flex-col items-center gap-[3px] bg-[#373737] shadow-[inset_1px_0_0_#292929]">
      <StepButton dir="up" />
      <div className="w-[25px] border-2 border-[#4d4d4d] bg-linear-to-r from-[#3a3a3a] to-[#434343] shadow-[0_0_0_1px_#262626]" style={{ height: thumb }} />
      <div className="flex-1" />
      <StepButton dir="down" />
    </div>
  );
}

/* ------------------------------------------------------------------ */
/* Left docks                                                          */
/* ------------------------------------------------------------------ */

function DockTitle({ title }: { title: string }) {
  return (
    <div className="flex h-[37px] shrink-0 items-center pl-[6px] pr-[8px]">
      <span className="flex-1 text-[22px] text-[#dedede]">{title}</span>
      <div className="flex gap-[6px] text-[#8b8b86]">
        <svg width="22" height="22" viewBox="0 0 22 22" fill="none" stroke="currentColor" strokeWidth="1.6">
          <rect x="1.5" y="1.5" width="19" height="19" strokeDasharray="15 2 2 0" />
          <path d="M5 9h8v8H5zM9 9V5h8v8h-4" />
        </svg>
        <svg width="22" height="22" viewBox="0 0 22 22" fill="none" stroke="currentColor" strokeWidth="1.6">
          <rect x="1.5" y="1.5" width="19" height="19" strokeDasharray="15 2 2 0" />
          <path d="M5 5l12 12M17 5 5 17" strokeWidth="3" />
        </svg>
      </div>
    </div>
  );
}

function FolderArt({ children }: Kids) {
  return (
    <g>
      <path d="M.8 1.6h10l3.4 3.2h9v17.6H.8z" fill="#eeeeec" stroke="#888a85" strokeWidth="1.4" />
      {children}
    </g>
  );
}

function GridArt({ fills, line }: { fills: string[]; line?: boolean }) {
  return (
    <g>
      {line && <rect x=".4" y=".4" width="23.2" height="23.2" fill="#35485f" stroke="#93a8c2" strokeWidth=".6" />}
      {[0, 1, 2].map((r) => [0, 1, 2].map((c) => <rect key={`${r}${c}`} x={1 + c * 8} y={1 + r * 8} width="6.4" height="6.2" fill={fills[r]} />))}
    </g>
  );
}

const treeIcons: Record<string, React.ReactNode> = {
  folder: <FolderArt />,
  star: <path d="M12-1.4 15.2 8.6H25.6L17.2 14.8 20.4 25.2 12 18.8 3.6 25.2 6.8 14.8-1.6 8.6H8.8z" fill="#fdf36b" stroke="#c4a000" strokeWidth="1.2" />,
  bookmark: (
    <g>
      <BookArt />
      <path d="M13 1.6h5v8.6l-2.5 2.8L13 10.2z" fill={BLUE} stroke="#2c4c75" strokeWidth="1" />
    </g>
  ),
  project: (
    <g>
      <path d="M.8 1.6h10l3.4 3.2h9v17.6H.8z" fill="#b5e04c" stroke="#888a85" strokeWidth="1.4" />
      <path d="M2 5 20 21M2 14l9-3" stroke="#fbfbd4" strokeWidth="1.6" />
      <path d="M12 7l4-2 5 2-1 6-4 2-5-4z" fill="#129a00" />
    </g>
  ),
  home: (
    <FolderArt>
      <path d="M5.4 14 12 7.6 18.6 14M7.6 12.6v7h8.8v-7" fill="none" stroke="#2e3436" strokeWidth="1.7" />
    </FolderArt>
  ),
  open: (
    <g>
      <path d="M0 .4h12l3 3h9v3.2H0z" fill="#888a85" />
      <path d="M.8 8h10l3.4 3h9v12H.8z" fill="#eeeeec" stroke="#888a85" strokeWidth="1.4" />
    </g>
  ),
  geopackage: <BoxGlobe />,
  db: (
    <g fill="#f2f2f0" stroke="#8e8e88" strokeWidth="1">
      <path d="M2 3.4v17.2c0 3.6 20 3.6 20 0V3.4z" />
      <path d="M2 9.4c0 2.8 20 2.8 20 0M2 15.6c0 2.8 20 2.8 20 0" fill="none" />
      <ellipse cx="12" cy="3.8" rx="10" ry="2.6" />
    </g>
  ),
  quill: <QuillArt />,
  postgres: (
    <g>
      <path d="M-1 3C0-1 6-2 9 0c3-2 8-2 11 0 4 0 6 3 5 7-1 4-3 8-5 8l2 1-3 1.6h-2V22c0 3-5 3.6-5.4 0L11 15c-2 2-5 2-6 0C2 12 0 7-1 3z" fill={BLUE} stroke="#3d5f8a" strokeWidth="1" />
      <path d="M9 1C6 4 6 10 11 15M19 1c2 3 2 8-1 14M9 6h3v6M17 6h2v5" fill="none" stroke="#3d5f8a" strokeWidth="1.2" />
    </g>
  ),
  hana: (
    <g>
      <rect x="3.4" y="3.4" width="17.2" height="17.2" fill={BLUE} />
      <rect x="-.6" y="-.6" width="25.2" height="25.2" fill="none" stroke="#46678f" strokeWidth="2" strokeDasharray="2.2 2.4" />
    </g>
  ),
  stac: (
    <g fill="none" strokeWidth="1.4">
      <path d="M0 13V0h14" stroke="#c9d9ee" />
      <path d="M4 17V4h14" stroke="#8badd6" />
      <path d="M8 21V8h14" stroke="#4d74a6" />
      <path d="M11 24h13V11" stroke="#4d74a6" />
      <circle cx="16.6" cy="15.8" r="5" stroke="#a9c4e6" strokeWidth="1.6" />
      <path d="M13 14l3 1 1 3 3-4" stroke="#a9c4e6" />
    </g>
  ),
  mssql: (
    <g>
      <path d="M0-.6C8 0 20 2 25 11c-9 1-17 4-24.4 11.6C6 16 6 8 0-.6z" fill={BLUE} stroke="#3d5f8a" strokeWidth="1" />
      <path d="M7 1c5 6 3 11 1 14M12 2c5 5 4 9 2 11M17 4c4 4 3 6 2 8" fill="none" stroke="#3d5f8a" strokeWidth="1" />
    </g>
  ),
  oracle: <rect x=".4" y="3.6" width="23.2" height="16.8" rx="6" fill={BLUE} stroke="#46678f" strokeWidth="2.4" />,
  globe: <GlobeArt cx={12} cy={12} r={12} />,
  cloud: <path d="M4 20.6c-4.6-.6-4.4-6.6.4-7C5 5 14 3 16 10c2-1 5 0 4.6 3.4 4 1 4 6.6 0 7.2z" fill="#b9cfea" stroke="#5b7ea9" strokeWidth="1.2" />,
  scenes: (
    <g stroke="#4d6f98" strokeWidth="1">
      <path d="M12-.6 22 5 12 9.6 2 5z" fill="#9bbbe0" />
      <path d="M2 7.6 11.4 12v11.6L2 18.6z" fill="#c9d9ee" />
      <path d="M22 7.6 12.6 12v11.6L22 18.6z" fill="#9bbbe0" />
    </g>
  ),
  sensor: (
    <g fill="none" stroke="#41628a" strokeWidth="1.5">
      <circle cx="12" cy="12" r="4.2" fill="#46678f" stroke="none" />
      <path d="M11 9.4q-2.6 2.6 0 5.2" stroke="#c9d9ee" strokeWidth="1.8" />
      <path d="M6.4 6.4q-4.4 5.6 0 11.2M3.4 4q-6 8 0 16M17.6 6.4q4.4 5.6 0 11.2M20.6 4q6 8 0 16" />
    </g>
  ),
  vtiles: <GridArt fills={["#f5f5f3", "#d6e2f1", "#adc7e6"]} line />,
  xyz: <GridArt fills={[BLUE, BLUE, BLUE]} />,
};

type Node = { icon: string; label: string; level?: number; state?: "open" | "closed"; wide?: boolean };

const tree: Node[] = [
  { icon: "folder", label: "/Volumes", state: "closed" },
  { icon: "star", label: "Favorites" },
  { icon: "bookmark", label: "Spatial Bookmarks", state: "closed" },
  { icon: "project", label: "Project Home", state: "closed" },
  { icon: "home", label: "Home", state: "closed" },
  { icon: "open", label: "/ (Macintosh HD)", state: "open" },
  { icon: "folder", label: "Applications", state: "closed", level: 1 },
  { icon: "folder", label: "Library", state: "closed", level: 1 },
  { icon: "folder", label: "System", state: "closed", level: 1 },
  { icon: "folder", label: "Users", state: "closed", level: 1 },
  { icon: "geopackage", label: "GeoPackage", state: "open" },
  { icon: "db", label: "FPA_FOD_20221014.gpkg", state: "closed", level: 1, wide: true },
  { icon: "quill", label: "SpatiaLite" },
  { icon: "postgres", label: "PostgreSQL" },
  { icon: "hana", label: "SAP HANA" },
  { icon: "stac", label: "STAC" },
  { icon: "mssql", label: "MS SQL Server" },
  { icon: "oracle", label: "Oracle" },
  { icon: "globe", label: "WMS/WMTS" },
  { icon: "cloud", label: "Cloud" },
  { icon: "scenes", label: "Scenes" },
  { icon: "sensor", label: "SensorThings" },
  { icon: "vtiles", label: "Vector Tiles" },
  { icon: "xyz", label: "XYZ Tiles", state: "open" },
  { icon: "xyz", label: "Bing VirtualEarth", level: 1 },
];

function Expander({ state }: { state?: "open" | "closed" }) {
  return (
    <svg width="16" height="16" viewBox="0 0 16 16" className="shrink-0">
      {state === "open" && <path d="M0 4h16l-8 8.5z" fill="#a9a9a9" />}
      {state === "closed" && <path d="M4 0v16l8.5-8z" fill="#a9a9a9" />}
    </svg>
  );
}

function Browser() {
  return (
    <section className="flex h-[1008px] shrink-0 flex-col">
      <DockTitle title="Browser" />
      <div className="flex h-[63px] shrink-0 items-center gap-[22px] pb-[3px] pl-[15px]">
        <Svg size={28}>
          <rect x="1" y="1" width="18" height="18" fill="#eeeeec" stroke="#888a85" strokeWidth="1.4" />
          <rect x="13.6" y="14" width="9.4" height="9.4" rx="1.6" fill="#5b8e5d" />
          <path d="M18.3 15.4v6.6M15 18.7h6.6" stroke="#fff" strokeWidth="1.8" />
        </Svg>
        <Svg size={28}><RefreshArt /></Svg>
        <Svg size={28}><FunnelArt /></Svg>
        <Svg size={28}><TreeArrowArt up /></Svg>
        <Svg size={28}><InfoArt r={10.8} /></Svg>
      </div>
      <div className="flex h-[878px] w-[452px] shrink-0 border-y border-[#262626]">
        <div className="flex min-w-0 flex-1 flex-col overflow-hidden bg-[#1e1e1e]">
          {tree.map((n) => (
            <div key={n.label} className={n.level ? "flex h-[36px] shrink-0 items-center pl-[40px]" : "flex h-[36px] shrink-0 items-center pl-[8px]"}>
              <Expander state={n.state} />
              <svg width="28" height="28" viewBox="0 0 24 24" className="ml-[16px] shrink-0 overflow-visible">
                {treeIcons[n.icon]}
              </svg>
              <span className={n.wide ? "ml-[14px] whitespace-nowrap text-[25px] leading-[36px] tracking-[0.8px] text-[#dedede]" : "ml-[14px] whitespace-nowrap text-[25px] leading-[36px] tracking-[0.3px] text-[#dedede]"}>{n.label}</span>
            </div>
          ))}
        </div>
        <VScroll thumb={322} />
      </div>
      <div className="flex h-[28px] w-[452px] shrink-0 items-center border-b border-[#262626] bg-[#373737]">
        <StepButton dir="left" />
        <div className="ml-[3px] h-[25px] w-[299px] border-2 border-[#4d4d4d] bg-[#3f3f3f] shadow-[0_0_0_1px_#262626]" />
        <div className="flex-1" />
        <StepButton dir="right" />
        <div className="h-full w-[29px] bg-[#323232]" />
      </div>
    </section>
  );
}

function Check({ on = false, faint = false }: { on?: boolean; faint?: boolean }) {
  return (
    <span className={faint ? "flex size-[28px] shrink-0 border-2 border-[#292929] bg-[#303030]" : "flex size-[28px] shrink-0 items-center justify-center border-2 border-[#272727] bg-[#1d1d1d]"}>
      {on && (
        <svg width="20" height="22" viewBox="0 0 20 22" fill="none">
          <path d="M3 11.500 7.800 18 16.500 2" stroke="#cfcfcf" strokeWidth="2.8" />
        </svg>
      )}
    </span>
  );
}

const line = (c: string) => <path d="M0 12h24" stroke={c} strokeWidth="1.6" />;
const dot = (c: string) => <circle cx="12" cy="12" r="6.2" fill={c} stroke="#333" strokeWidth=".4" />;

const layers = [
  { name: "lexington_boundary", art: line("#b5a583") },
  { name: "footpath", art: line("#6f8383") },
  { name: "centroid_1", art: dot("#95552c"), current: true },
  { name: "tourism", art: dot("#c93a3a") },
  {
    name: "OpenStreetMap",
    open: true,
    art: (
      <g transform="translate(3 3) scale(.75)">
        <rect width="26" height="26" fill="#2c3e54" />
        <path d="M9 0h8v9H9zM0 9h9v8H0zM17 9h9v8h-9zM9 17h8v9H9z" fill="#b5cdea" />
        <path d="M18 18h8v8h-8z" fill="#1e1e1e" />
      </g>
    ),
  },
];

function Layers() {
  return (
    <section className="flex flex-1 flex-col">
      <div className="flex h-[12px] shrink-0 items-center justify-center">
        <Dots n={6} layout="row" />
      </div>
      <DockTitle title="Layers" />
      <div className="flex h-[63px] shrink-0 items-center pb-[2px] pl-[15px]">
        <Svg size={30}>
          <path d="M4 3l10 2-2 14-9-4z" fill="#fce94f" />
          <path d="M2 10l9 2-1 7-9-4z" fill="#4a86cf" />
          <path d="M1 14l9 4-3 4-7-3z" fill="#d33" />
          <path d="M10 10l7 6-5 6-7-4z" fill="#dba65c" stroke="#8a5a1a" strokeWidth=".7" />
          <path d="M14 13 23.5 2" stroke="#b3701c" strokeWidth="2.6" />
          <path d="M9.6 9.6 18 16" stroke="#c77d22" strokeWidth="2.4" />
        </Svg>
        <div className="ml-[20px]">
          <Svg size={30}>
            <path d="M1 11v11h9M4 8v11h9" fill="none" stroke="#9a9a95" strokeWidth="1.4" />
            <rect x="6.6" y="3" width="14" height="14" fill="#eee" stroke="#888a85" strokeWidth="1.4" />
            <path d="M10 14V3c0-3 5-3 5 0v11c0 2-3 2-3 0V6" fill="none" stroke="#3a5f8a" strokeWidth="1.2" />
            <rect x="14.4" y="14.6" width="9" height="9" rx="1.4" fill="#5b8e5d" />
            <path d="M19 16v6M16 19h6" stroke="#fff" strokeWidth="1.6" />
          </Svg>
        </div>
        <div className="ml-[20px]">
          <svg width="36" height="32" viewBox="0 0 36 32">
            <path d="M2 8Q14 0 28 7" fill="none" stroke="#777" strokeWidth="1.6" />
            <path d="M1 17Q15 3 30 17 15 29 1 17z" fill="#f2f2f2" stroke="#999" strokeWidth="1" />
            <circle cx="15" cy="15.5" r="7.4" fill="#6f9fdc" stroke="#31578a" strokeWidth="1.2" />
            <circle cx="15" cy="15.5" r="3.2" fill="#0a0a14" />
            <path d="M24 26h11l-5.5 5.5z" fill="#aaa" />
          </svg>
        </div>
        <div className="ml-[14px] flex items-end">
          <Svg size={30}><FunnelArt /></Svg>
          <svg width="12" height="6" viewBox="0 0 12 6" className="-ml-[7px]"><path d="M0 0h12l-6 6z" fill="#aaa" /></svg>
        </div>
        <div className="ml-[15px]">
          <svg width="31" height="32" viewBox="0 0 31 32">
            <text x="1" y="19" fontSize="32" fontFamily="'DejaVu Serif', serif" fill="#6a3a74">ε</text>
            <rect x="16" y="16" width="14" height="14" fill="#8a8a85" />
            <path d="M17 18h12l-4 5v7h-4v-7z" fill="#eee" />
          </svg>
        </div>
        <Caret className="ml-[11px] text-[#a9a9a9]" />
        <div className="ml-[16px]"><Svg size={30}><TreeArrowArt /></Svg></div>
        <div className="ml-[20px]"><Svg size={30}><TreeArrowArt up /></Svg></div>
        <div className="ml-[19px]">
          <Svg size={30}>
            <rect x="1.4" y="1.4" width="17.6" height="17" fill="#eeeeec" stroke="#888a85" strokeWidth="1.4" />
            <rect x="13.6" y="13.6" width="9.8" height="8.8" rx="1.4" fill="#ef3b3b" />
            <path d="M15.4 18h6.2" stroke="#fff" strokeWidth="2" />
          </Svg>
        </div>
      </div>
      <div className="flex w-[452px] flex-1 flex-col border-t border-[#262626] bg-[#1e1e1e]">
        {layers.map((l) => (
          <div key={l.name} className={l.current ? "flex h-[36px] items-center bg-[#454545] pl-[12px]" : "flex h-[36px] items-center pl-[12px]"}>
            <Expander state={l.open ? "open" : undefined} />
            <span className="ml-[18px]"><Check on /></span>
            <svg width="32" height="32" viewBox="0 0 24 24" className="ml-[12px] shrink-0">{l.art}</svg>
            <span
              className={
                l.current
                  ? "ml-[12px] text-[26px] font-bold leading-[34px] tracking-[0.25px] text-white underline decoration-[3px] underline-offset-[4px]"
                  : "ml-[12px] text-[26px] font-bold leading-[34px] tracking-[0.25px] text-[#dedede]"
              }
            >
              {l.name}
            </span>
          </div>
        ))}
      </div>
    </section>
  );
}

/* ------------------------------------------------------------------ */
/* Map canvas                                                          */
/* ------------------------------------------------------------------ */

function rng(seed: number) {
  let a = seed;
  return () => {
    a = (a + 0x6d2b79f5) | 0;
    let t = Math.imul(a ^ (a >>> 15), 1 | a);
    t = (t + Math.imul(t ^ (t >>> 7), 61 | t)) ^ t;
    return ((t ^ (t >>> 14)) >>> 0) / 4294967296;
  };
}

/* An irregular lattice of short curved streets. */
function streets(seed: number, x0: number, y0: number, x1: number, y1: number, sx: number, sy: number, jitter: number, keep: number) {
  const r = rng(seed);
  const nx = Math.ceil((x1 - x0) / sx);
  const ny = Math.ceil((y1 - y0) / sy);
  const pts: number[][][] = [];
  for (let j = 0; j <= ny; j++) {
    pts.push([]);
    for (let i = 0; i <= nx; i++) {
      pts[j].push([x0 + i * sx + (r() - 0.5) * jitter, y0 + j * sy + (r() - 0.5) * jitter]);
    }
  }
  let d = "";
  const seg = (a: number[], b: number[]) => {
    const mx = (a[0] + b[0]) / 2 + (r() - 0.5) * jitter * 0.8;
    const my = (a[1] + b[1]) / 2 + (r() - 0.5) * jitter * 0.8;
    d += `M${a[0].toFixed(1)} ${a[1].toFixed(1)}Q${mx.toFixed(1)} ${my.toFixed(1)} ${b[0].toFixed(1)} ${b[1].toFixed(1)}`;
  };
  for (let j = 0; j <= ny; j++) {
    for (let i = 0; i <= nx; i++) {
      if (i < nx && r() < keep) seg(pts[j][i], pts[j][i + 1]);
      if (j < ny && r() < keep * 0.8) seg(pts[j][i], pts[j + 1][i]);
    }
  }
  return d;
}

const minorEast = streets(7, -700, -700, 760, 900, 30, 17, 13, 0.66);
const minorSouth = streets(21, -900, -500, 900, 500, 22, 30, 14, 0.68);
const walkGrid = streets(3, -260, -260, 260, 260, 27, 14, 3, 0.88);

const NE = "translate(1650 230) scale(.33333 .42730)";
const SE = "translate(1650 900) scale(.33333 .42730)";
const SO = "translate(480 1060) scale(.77800 .33333)";

type Shape = [fill: string, d: string];

function Areas({ t, items }: { t: string; items: Shape[] }) {
  return (
    <g transform={t}>
      {items.map(([f, d]) => (
        <path key={d} d={`M${d}z`} fill={f} />
      ))}
    </g>
  );
}

const roadStyle = {
  motorway: ["#d8607c", "#e892a2", 17],
  trunk: ["#d9806a", "#f9b29c", 14],
  trunkThin: ["#d9806a", "#f9b29c", 9],
  primary: ["#c9a15c", "#fcd6a4", 9],
  secondary: ["#bcbf72", "#f4f8bb", 9],
  white: ["#c6c6c6", "#ffffff", 6],
  whiteThin: ["#c6c6c6", "#ffffff", 4],
  rail: ["#6d6d6d", "#9b9b9b", 5],
  walk: ["#68797f", "#c9cfd0", 3.5],
  walkThin: ["#68797f", "#68797f", 1.4],
  border: ["#a48b7d", "#a48b7d", 1.5],
} as const;

type Road = [kind: keyof typeof roadStyle, d: string];

function Roads({ t, items }: { t: string; items: Road[] }) {
  return (
    <g transform={t} fill="none" strokeLinejoin="round">
      {items.map(([k, d]) => (
        <path key={d} d={`M${d}`} stroke={roadStyle[k][0]} strokeWidth={roadStyle[k][2]} vectorEffect="non-scaling-stroke" />
      ))}
      {items.map(([k, d]) => (
        <path key={d} d={`M${d}`} stroke={roadStyle[k][1]} strokeWidth={Math.max(roadStyle[k][2] - 2, 1)} strokeDasharray={k === "rail" ? "9 9" : undefined} vectorEffect="non-scaling-stroke" />
      ))}
    </g>
  );
}

const RES = "#dedede";
const areasNE: Shape[] = [
  [RES, "470,500 560,350 600,310 720,110 840,130 950,250 940,300 1000,400 920,470 830,510 600,520"],
  [RES, "200,210 600,400 720,470 470,510 440,490 370,330 150,270"],
  [RES, "470,980 830,830 960,920 1080,1030 640,1125 480,1050"],
  [RES, "490,140 640,60 700,110 650,200 520,190"],
  ["#d7efb2", "70,30 140,30 320,70 300,205 70,155"],
  ["#c4d7a3", "320,110 390,110 490,180 480,240 370,240 320,190"],
  ["#aecf92", "240,205 330,170 420,200 530,230 500,280 350,250"],
  ["#e9efc7", "340,240 460,210 540,270 480,310 400,300"],
  ["#ffffe0", "350,35 440,50 400,110 300,100"],
  ["#c8facc", "400,90 440,70 520,90 480,150 430,120"],
  ["#88e0be", "440,130 490,130 470,165 445,160"],
  ["#cdebb0", "510,90 670,130 640,165 500,140"],
  ["#c8facc", "250,310 330,300 360,325 290,345"],
  ["#88e0be", "270,305 310,310 290,332"],
  ["#bcbba4", "90,345 190,400 150,450 70,420 70,360"],
  ["#fad2cc", "160,470 350,500 340,560 240,570 150,520"],
  ["#ebdbe8", "70,560 120,570 200,620 160,660 70,620"],
  ["#c8facc", "860,240 910,215 950,240 940,290 870,270"],
  ["#c8facc", "900,320 970,290 990,340 940,370"],
  ["#88e0be", "915,315 945,305 970,325 945,345"],
  ["#f6d6d2", "930,370 1010,330 1040,370 990,400"],
  ["#ffffe0", "1145,160 1220,135 1280,210 1230,225"],
  ["#c8facc", "1270,130 1320,150 1300,170 1260,165"],
  ["#cdebb0", "1060,490 1160,445 1190,480 1100,515"],
  ["#c8facc", "440,505 540,515 550,535 500,545"],
  ["#c8facc", "730,630 790,605 900,680 830,715"],
  ["#88e0be", "760,620 850,660 830,700 790,660"],
  ["#ffffe0", "830,710 890,680 950,720 880,755"],
  ["#ffffe0", "1050,630 1240,540 1300,580 1210,620 1260,650 1230,670 1180,640 1100,665"],
  ["#88e0be", "1215,560 1250,540 1270,580 1240,600"],
  ["#88e0be", "1155,610 1190,600 1200,630 1160,635"],
  ["#f8d8d6", "870,820 930,800 1000,860 930,885"],
  ["#d9f7df", "390,940 480,905 590,960 460,985"],
  ["#88e0be", "480,940 540,935 560,960 500,960"],
  ["#a9cdb0", "330,1060 400,1030 440,1050 370,1085"],
  ["#f2d5d8", "690,1130 840,1040 870,1010 900,1030 850,1050 720,1130"],
  ["#ffffe0", "1190,1110 1290,1065 1330,1100 1230,1145"],
  ["#f6f0cc", "250,1190 310,1150 370,1180 320,1225"],
  ["#ebdbe8", "280,1290 370,1250 430,1300 360,1320 300,1320"],
  ["#c8facc", "1280,930 1320,910 1350,940 1350,985"],
  ["#c8facc", "980,1455 1050,1480 1170,1450 1150,1500 1020,1530"],
  ["#cdebb0", "1270,360 1350,350 1350,410"],
];

const areasSE: Shape[] = [
  [RES, "190,1120 560,1080 850,1080 1000,1120 960,1330 850,1410 640,1568 480,1568 0,1430 0,1300 70,1180"],
  [RES, "70,870 260,850 400,900 700,960 760,1030 500,1080 70,1090"],
  [RES, "970,720 1110,650 1310,720 1350,800 1350,950 1080,1110 830,1030 900,890"],
  [RES, "1110,420 1350,420 1350,530 1200,540 1110,480"],
  [RES, "1240,340 1350,300 1350,430 1240,400"],
  ["#def6c0", "530,160 820,0 950,0 1020,70 700,265"],
  ["#c8e8a8", "610,170 820,60 780,90 640,200"],
  ["#c8e8a8", "790,70 820,10 930,50 850,110"],
  ["#c8facc", "240,90 310,55 360,90 280,135"],
  ["#ffffe5", "455,270 545,215 625,260 545,325"],
  ["#ffffe5", "640,410 780,450 640,530 570,480"],
  ["#88e0be", "620,490 660,480 680,495 650,510"],
  ["#88e0be", "690,465 730,445 745,460 705,480"],
  ["#88e0be", "600,450 640,440 640,460 605,462"],
  ["#c8facc", "560,490 640,530 600,560 560,560"],
  ["#ebdbe8", "600,560 850,415 900,440 880,520 810,625"],
  ["#ffffe5", "920,220 970,195 1005,250 950,255"],
  ["#c8facc", "970,320 1110,275 1130,300 1030,380"],
  ["#88e0be", "1010,340 1060,320 1070,340 1030,365"],
  ["#fad8d4", "1130,410 1200,420 1180,450 1120,440"],
  ["#fad8d4", "1280,670 1350,640 1350,700"],
  ["#cdebb0", "1210,790 1260,770 1310,800 1240,815"],
  ["#c8facc", "1190,900 1260,860 1320,900 1260,930"],
  ["#fad8d4", "280,925 370,970 270,955"],
  ["#fad8d4", "850,970 930,980 900,1010 850,1000"],
  ["#fad8d4", "770,1040 850,1040 840,1080"],
  ["#fad8d4", "920,1240 980,1270 950,1310 900,1280"],
  ["#def6c0", "550,1155 820,1255 650,1470 590,1430 640,1360 470,1305 430,1250"],
  ["#ffffe0", "260,1190 430,1290 370,1370 150,1280"],
  ["#88e0be", "250,1205 310,1200 300,1235 255,1230"],
  ["#c8facc", "220,1310 380,1340 350,1390 240,1370"],
  ["#88e0be", "340,1325 380,1320 370,1350 330,1345"],
  ["#ffffe0", "0,1520 70,1530 50,1568 0,1568"],
  ["#c8facc", "920,1490 1020,1475 1000,1520 910,1525"],
  ["#aad3df", "375,610 420,650 470,685 495,730 545,740 590,770 640,765 665,740 690,710 720,665 770,645 820,620 830,570 870,530 890,460 950,480 930,530 910,570 900,640 960,650 950,680 860,680 790,690 775,740 920,750 900,770 790,770 740,800 710,820 740,870 790,900 850,880 830,930 720,900 680,875 600,880 490,850 540,832 590,815 590,780 510,750 460,765 470,735 440,690 400,660 370,630"],
  ["#aad3df", "650,660 720,670 700,700 660,690"],
  ["#aad3df", "650,900 680,905 680,930 655,925"],
  ["#aad3df", "1290,1250 1350,1270 1350,1310 1310,1290"],
  ["#aad3df", "1280,1430 1350,1400 1350,1480 1300,1450"],
  ["#aad3df", "160,830 190,835 180,850 150,848"],
];

const areasSO: Shape[] = [
  [RES, "0,1290 150,1370 230,1450 120,1530 0,1530"],
  [RES, "180,1170 480,1170 560,1300 500,1400 300,1350"],
  [RES, "930,1175 1400,1175 1340,1330 1200,1300 1000,1220"],
  [RES, "1420,1175 1568,1175 1568,1400 1430,1260"],
  ["#f3bdb9", "840,1170 925,1170 890,1390 870,1450 795,1385"],
  ["#e8eec9", "790,1390 870,1450 850,1530 760,1530"],
  ["#b9e3c7", "718,1170 835,1170 800,1312 715,1215"],
  ["#7ec8a6", "740,1205 775,1200 780,1250 745,1245"],
  ["#89b57e", "490,1230 520,1240 552,1360 538,1385 515,1310"],
  ["#aed7de", "550,1365 565,1400 560,1450 590,1480 575,1480"],
  ["#fbc7c4", "905,1350 970,1370 965,1450 905,1510"],
  ["#c3ecab", "1100,1350 1155,1410 1120,1500 1060,1430"],
  ["#c8facc", "1060,1370 1085,1430 1150,1510 1120,1520 1060,1420"],
  ["#f7f7bd", "1115,1320 1135,1335 1125,1350 1110,1340"],
  ["#f7f7bd", "1150,1355 1165,1370 1160,1385 1145,1370"],
  ["#ffffd0", "1230,1440 1275,1460 1250,1530 1215,1530"],
  ["#ffffd0", "1500,1460 1535,1480 1520,1530 1490,1530"],
  ["#ebdbe8", "280,1470 320,1490 300,1530 270,1500"],
];

const roadsNE: Road[] = [
  ["white", "130,820 150,700 170,640 410,525"],
  ["white", "230,880 400,790 560,700 700,630 830,560 1100,430 1350,340"],
  ["whiteThin", "310,925 370,930 560,875 700,840 860,810"],
  ["whiteThin", "590,370 600,500 M540,400 550,520 M600,500 820,440 M590,380 720,470"],
  ["whiteThin", "960,1190 1010,1150 1080,1150 1130,1200 M1130,1210 1230,1200 1350,1140"],
  ["whiteThin", "620,1230 690,1310 M800,1430 790,1470 700,1530"],
  ["border", "150,30 320,70 300,110 330,160 300,205 70,155"],
  ["rail", "70,685 330,640 560,632 680,605"],
  ["rail", "830,540 1100,405 1200,355 1350,325"],
  ["rail", "70,800 190,870 330,970 480,1080 620,1150 655,1190 640,1230 500,1290 470,1340 480,1380 580,1430 720,1475 800,1510 900,1568"],
  ["secondary", "880,800 1100,740 1350,680"],
  ["secondary", "70,745 135,820 240,890 400,1010 600,1130 720,1170 760,1210 765,1295"],
  ["secondary", "650,1320 800,1400 900,1480 1060,1568"],
  ["secondary", "765,30 730,100 640,250 610,300 520,390 460,480 410,520"],
  ["primary", "70,870 135,825 340,715 480,645 545,605"],
  ["primary", "70,1430 180,1510 280,1580"],
  ["trunkThin", "545,605 700,570 830,520 1060,400 1200,340 1350,290"],
  ["trunk", "70,455 210,472 300,490 420,530 540,610 700,730 850,830 1060,1000 1140,1065 1185,1130 1200,1200 1185,1300 1180,1400 1230,1578"],
  ["trunkThin", "1200,1283 1350,1288"],
  ["primary", "70,1305 230,1300 330,1330 480,1325 750,1300 1000,1283 1200,1283"],
  ["motorway", "735,20 850,95 950,190 1020,280 1130,390 1250,470 1360,550"],
];

const walksNE: Road[] = [
  ["walk", "720,108 830,125 910,190 950,250 940,300 880,340 820,350 760,320 700,280 630,268"],
  ["walk", "720,108 740,150 680,245 800,275 870,330"],
  ["walk", "600,315 750,395 820,350 M600,315 660,370 750,435 820,395"],
  ["walk", "740,195 880,165 M700,220 820,190 M760,150 830,170 M660,280 640,305"],
  ["walk", "850,345 920,380 840,415 M800,385 930,470 M880,340 1005,425"],
  ["walkThin", "760,75 765,110 M795,90 790,115 M365,135 390,150 440,145 M255,310 290,330 360,328"],
  ["walkThin", "345,520 400,520 M370,500 380,490 M300,450 325,462 M1250,150 1350,140"],
  ["walk", "345,710 440,773 M365,825 470,900 M330,960 480,1060 600,1130 660,1150"],
  ["walk", "190,858 310,920 M125,740 130,830 190,800"],
  ["walkThin", "70,745 110,780 135,820 M80,570 90,575 M500,890 545,920"],
];

const roadsSE: Road[] = [
  ["white", "310,240 200,380 150,420 150,500 110,620 90,720 130,830 220,870 280,900 230,960 220,1060 230,1120 200,1150"],
  ["white", "310,235 450,300 640,400 740,400 820,385 960,380 1200,410 1350,430"],
  ["whiteThin", "730,480 790,470 850,470 M720,500 730,540 830,570 870,540 890,440"],
  ["whiteThin", "570,570 600,650 640,740 720,780 M640,540 700,520"],
  ["whiteThin", "1190,265 1280,270 1350,310 M1290,250 1210,470 M450,95 470,70 640,0"],
  ["whiteThin", "1000,710 1060,660 1120,680 1150,720 1100,770 1020,750z M1080,930 1140,890 1200,930 1180,990 1110,1000z"],
  ["white", "1110,1150 1160,1180 1170,1230 1140,1320 1210,1420"],
  ["white", "490,1320 440,1380 380,1420 410,1470 410,1568"],
  ["whiteThin", "530,1450 620,1360 M540,1450 580,1480 640,1568"],
  ["rail", "900,0 1050,80 1200,170 1360,255"],
  ["secondary", "1030,0 1150,60 1250,90 1360,102"],
  ["secondary", "1195,620 1260,575 1360,560"],
  ["secondary", "-10,1415 200,1490 420,1578"],
  ["secondary", "60,690 180,730 250,800 400,860 600,940 800,1000 950,1060 1100,1140"],
  ["trunk", "1230,-10 1255,80 1200,220 1110,395"],
  ["trunk", "1060,540 1200,640 1360,755"],
  ["primary", "230,-10 450,130 700,290 890,420 1030,520"],
  ["motorway", "1110,390 1050,520 1020,600 960,730 900,880 840,970 700,1040 500,1080 60,1105"],
  ["primary", "1360,955 1200,1060 1100,1130 1020,1240 920,1390 840,1490 680,1580"],
];

const walksSE: Road[] = [
  ["walk", "70,1125 200,1150 430,1220 M200,1150 70,1260 M160,1165 80,1215"],
  ["walk", "530,1120 640,1140 780,1150 870,1190 950,1240 1000,1260 M870,1180 900,1120 960,1070 1010,1040"],
  ["walk", "530,1120 500,1180 430,1220 420,1260 490,1310 590,1330 625,1365"],
  ["walk", "740,1110 725,1200 820,1250 740,1380 M810,1280 930,1345 M820,1310 860,1270"],
  ["walk", "720,1400 800,1420 M710,1430 800,1450 M700,1455 700,1520 740,1530 M820,1440 900,1370"],
  ["walk", "980,1020 1060,890 1110,830 1160,800 1200,830 1350,830 M980,1020 1020,1050"],
  ["walk", "640,400 540,480 535,530 550,570 625,575 M580,930 680,960 800,1000 M70,410 170,410 235,330 70,270"],
  ["walk", "315,235 510,135 M130,0 300,120 M200,400 M70,130 310,235 M320,235 460,110"],
  ["walk", "1210,420 1190,460 1155,490 1170,520 1230,530 M1200,450 1240,460"],
  ["walkThin", "920,220 960,215 975,235 1075,215 M950,340 1100,290 M980,360 1030,370 M180,1300 250,1290 230,1320z"],
  ["walkThin", "0,1390 80,1300 130,1280 M30,1370 80,1390 M0,1300 100,1245 M100,1245 150,1340"],
];

const roadsSO: Road[] = [
  ["white", "1020,1170 1090,1250 1180,1340 1330,1500 1370,1540"],
  ["whiteThin", "1568,1370 1500,1480 1450,1540 M0,1395 150,1420 330,1530"],
  ["border", "0,1160 220,1370 400,1540"],
  ["secondary", "342,1170 300,1350 250,1540"],
  ["secondary", "1418,1170 1410,1240 1360,1350 1350,1540"],
  ["secondary", "1410,1240 1480,1310 1568,1420"],
  ["rail", "838,1170 795,1370 755,1540"],
  ["trunk", "935,1170 900,1360 875,1540"],
  ["primary", "425,1160 560,1240 640,1310 710,1315 800,1390 880,1450 980,1545"],
];

const walksSO: Road[] = [
  ["walk", "180,1175 180,1215 320,1240 380,1330 385,1375 405,1400 M210,1190 340,1215 M330,1190 410,1320 410,1360"],
  ["walk", "360,1180 450,1290 480,1220 M480,1200 500,1330 540,1395 560,1290 M560,1200 640,1290 M610,1175 670,1285 700,1200"],
  ["walk", "520,1175 560,1320 M580,1220 650,1230 M600,1250 690,1200 M700,1175 720,1230 770,1300"],
  ["walk", "1568,1190 1510,1240 1480,1310 M1568,1220 1515,1250 1510,1290 1540,1350 1530,1370"],
];

function MapText({ id, d, children, size = 15, fill = "#4f4830" }: Kids & { id: string; d: string; size?: number; fill?: string }) {
  return (
    <g>
      <path id={id} d={d} fill="none" />
      <text fontSize={size} fontFamily="'Noto Sans', 'Open Sans', sans-serif" fill={fill} stroke="#fff" strokeOpacity=".35" strokeWidth="1.5" paintOrder="stroke" fontWeight="600">
        <textPath href={`#${id}`}>{children}</textPath>
      </text>
    </g>
  );
}

function Exit({ x, y, children }: Kids & { x: number; y: number }) {
  return (
    <text x={x} y={y} textAnchor="middle" fontSize="16" letterSpacing=".6" fontWeight="700" fontStyle="italic" fontFamily="'Noto Sans', sans-serif" fill="#b23c50" stroke="#fff" strokeWidth="2.5" paintOrder="stroke">
      {children}
    </text>
  );
}

function Shield({ x, y, w, lines }: { x: number; y: number; w: number; lines: string[] }) {
  const h = 8 + lines.length * 19;
  return (
    <g>
      <rect x={x} y={y} width={w} height={h} rx="3" fill="#f4d4cb" stroke="#d9a192" strokeWidth="1.6" />
      {lines.map((l, i) => (
        <text key={l} x={x + w / 2} y={y + 19 + i * 19} textAnchor="middle" fontSize="16" letterSpacing=".9" fontWeight="600" fontFamily="'Noto Sans', sans-serif" fill="#8d4a40">
          {l}
        </text>
      ))}
    </g>
  );
}

function MapCanvas() {
  return (
    <svg viewBox="468 241 1632 1329" width="1632" height="1329" className="block">
      <defs>
        <clipPath id="east"><path d="M1600 241H2100V1570H1340L1400 1440z" /></clipPath>
        <clipPath id="south"><path d="M468 241H500V1440H1340V1570H468zM1340 1440H1400L1340 1570z" /></clipPath>
        <clipPath id="oldtown">
          <path d="M1660 632 1687 623 1763 708 1750 725 1772 742 1740 770 1790 800 1760 825 1866 850 1820 875 1780 900 1822 962 1756 1002 1708 1075 1660 1068z" />
        </clipPath>
      </defs>
      <rect x="468" y="241" width="1632" height="1329" fill="#f1eee8" />
      <Areas t={NE} items={areasNE.slice(0, 4)} />
      <Areas t={SE} items={areasSE.slice(0, 5)} />
      <Areas t={SO} items={areasSO.slice(0, 4)} />
      <g fill="none" clipPath="url(#east)">
        <g transform="translate(1850 760) rotate(33)">
          <path d={minorEast} stroke="#d2d0cd" strokeWidth="3.4" />
          <path d={minorEast} stroke="#fff" strokeWidth="2.1" />
        </g>
      </g>
      <g fill="none" clipPath="url(#south)">
        <g transform="translate(900 1400) rotate(-22)">
          <path d={minorSouth} stroke="#d0cecb" strokeWidth="3.4" />
          <path d={minorSouth} stroke="#fff" strokeWidth="2.1" />
        </g>
      </g>
      <Areas t={NE} items={areasNE.slice(4)} />
      <Areas t={SE} items={areasSE.slice(5)} />
      <Areas t={SO} items={areasSO.slice(4)} />
      <g fill="none" clipPath="url(#oldtown)">
        <g transform="translate(1740 830) rotate(-33)">
          <path d={walkGrid} stroke="#6b7c83" strokeWidth="3" />
          <path d={walkGrid} stroke="#d5d6d4" strokeWidth="1" />
        </g>
      </g>
      <Roads t={NE} items={roadsNE} />
      <Roads t={SE} items={roadsSE} />
      <Roads t={SO} items={roadsSO} />
      <path d="M1970 312 2000 345 2028 354 2046 378 2040 402 2012 388 1976 352z" fill="#e892a2" stroke="#d8607c" />
      <path d="M1980 345 1990 348 2006 368 1998 370zM2016 362 2024 364 2034 380 2028 384z" fill="#f1eee8" stroke="#d8607c" />
      <path d="M2033 778 2040 768 2050 762 2060 770 2062 778 2058 792 2046 800 2036 792z" fill="#f9b29c" />
      <path d="M1984 1118 2013 1105 2013 1131 1990 1156zM1892 1322 1930 1300 1932 1330 1890 1338z" fill="#e892a2" />
      <Roads t={NE} items={walksNE} />
      <Roads t={SE} items={walksSE} />
      <Roads t={SO} items={walksSO} />
      <path
        d="M2067 1437 2030 1480 1998 1520 1985 1570M1725 1488 1770 1492M1760 1492 1758 1520 1745 1545M1845 1105 1848 1150 1870 1185 1890 1190M1905 492 1945 520M1910 505 1935 530M2010 865 2030 870M1040 1455 1100 1495M945 1545 985 1562M2060 1290 2085 1280"
        fill="none"
        stroke="#4a5fe0"
        strokeWidth="2"
        strokeDasharray="3 4"
      />
      <path d="M1930 1146 1954 1152M1870 1224 1893 1241M1817 1267 1849 1276M2075 1510 2092 1522 2100 1535" fill="none" stroke="#555" strokeWidth="4" />

      {/* Strip visible between the dock and the dialog */}
      <g>
        <rect x="468" y="241" width="24" height="380" fill="#e9e6df" />
        <path d="M466 268 492 276" stroke="#e6e8a6" strokeWidth="9" />
        <path d="M466 564 492 577" stroke="#777" strokeWidth="5" />
        <rect x="468" y="622" width="24" height="130" fill="#bfe3cd" />
        <path d="M466 622 492 626" stroke="#ddd" strokeWidth="4" />
        <rect x="468" y="755" width="24" height="12" fill="#ef9c87" />
        <rect x="468" y="767" width="24" height="48" fill="#b9dc9d" />
        <path d="M466 868 492 888" stroke="#f0c38a" strokeWidth="11" />
        <rect x="462" y="969" width="24" height="26" rx="3" fill="#f5f5f5" stroke="#b7b7b7" />
        <rect x="468" y="1361" width="24" height="27" fill="#f0d8b8" />
        <text x="466" y="1381" fontSize="16" fontFamily="'Noto Sans', sans-serif" fill="#75573a">S 68</text>
        <path d="M480 1361 492 1340" stroke="#efbd80" strokeWidth="10" />
        <path d="M466 1312 492 1316" stroke="#dfe6a0" strokeWidth="8" />
      </g>

      <g stroke="#2b1a12" strokeWidth="1">
        <circle cx="1719" cy="619" r="5.6" fill="#b63030" />
        <circle cx="1758" cy="815" r="5.6" fill="#8a4a22" />
        <circle cx="1679" cy="815" r="5.6" fill="#8a4a22" />
      </g>

      <Shield x={1848} y={444} w={77} lines={["US 27", "US 68"]} />
      <Shield x={1877} y={553} w={66} lines={["KY 4"]} />
      <Exit x={1968} y={318}>113</Exit>
      <Exit x={2023} y={395}>113</Exit>
      <Exit x={2048} y={751}>13</Exit>
      <Exit x={2047} y={818}>13</Exit>
      <Exit x={2015} y={1088}>15</Exit>
      <Exit x={1982} y={1182}>15</Exit>
      <Exit x={1940} y={1300}>16</Exit>
      <Exit x={1872} y={1355}>16</Exit>
      <MapText id="liberty" d="M1917 840 1950 864 1992 902">Liberty Road</MapText>
      <MapText id="richmond1" d="M1718 892 1820 970">Richmond Road</MapText>
      <MapText id="richmond2" d="M2005 1148 2112 1232" fill="#70372a">Richmond Road</MapText>
      <MapText id="alumni1" d="M1730 1247 1770 1266 1830 1290">Alumni Drive</MapText>
      <MapText id="alumni2" d="M1927 1342 2020 1386">Alumni Drive</MapText>
      <MapText id="circle" d="M1731 1371 1790 1367 1860 1357" fill="#6b2a3a">New Circle Road</MapText>
      <MapText id="mow1" d="M2036 1380 2062 1354 2118 1322">Man O War B</MapText>
      <MapText id="mow2" d="M828 1460 920 1492 990 1509">Man O War Boulevard</MapText>
      <MapText id="way" d="M1672 605 1702 590">way</MapText>
      <text x="1672" y="1287" fontSize="17" fontFamily="'Noto Sans', sans-serif" fill="#777">yne-</text>
      <text x="1672" y="1306" fontSize="17" fontFamily="'Noto Sans', sans-serif" fill="#777">ck</text>
      <text x="716" y="1572" fontSize="19" fontStyle="italic" fontFamily="'Noto Sans', sans-serif" fill="#9a6fa0">Jes</text>
    </svg>
  );
}

/* ------------------------------------------------------------------ */
/* Dialog                                                              */
/* ------------------------------------------------------------------ */

const RAISED =
  "flex items-center rounded-[4px] border-2 border-[#545454] bg-linear-to-b from-[#484848] to-[#3b3b3b] shadow-[0_0_0_1.5px_#272727]";

function Combo({ value, className = "", disabled = false }: { value: string; className?: string; disabled?: boolean }) {
  return (
    <div className={`${RAISED} h-[45px] justify-between pl-[7px] pr-[11px] ${className}`}>
      <span className={disabled ? "pt-[2px] text-[#232323]" : "pt-[2px] text-black"}>{value}</span>
      <Caret className={disabled ? "text-[#2b2b2b]" : "text-[#1a1a1a]"} />
    </div>
  );
}

function Btn({ children, className = "", disabled = false }: Kids & { className?: string; disabled?: boolean }) {
  return (
    <div className={`${RAISED} h-[45px] justify-center pt-[2px] ${disabled ? "text-[#232323]" : "text-black"} ${className}`}>{children}</div>
  );
}

function CheckRow({ children, on = false, faint = false }: Kids & { on?: boolean; faint?: boolean }) {
  return (
    <div className={faint ? "flex h-[28px] shrink-0 items-center gap-[10px] text-[#606060]" : "flex h-[28px] shrink-0 items-center gap-[10px] whitespace-nowrap"}>
      <Check on={on} faint={faint} />
      <span className="pt-[2px] tracking-[0.32px]">{children}</span>
    </div>
  );
}

function GroupHead({ children }: Kids) {
  return (
    <div className="flex h-[30px] items-center gap-[17px] pl-[5px] text-[26px] font-bold tracking-[0.28px] text-[#e2e2e2]">
      <svg width="22" height="16" viewBox="0 0 22 16">
        <path d="M2 1.5h18L11 14z" fill="none" stroke="#161616" strokeWidth="2" />
      </svg>
      <span className="pt-px">{children}</span>
    </div>
  );
}

const fields = ["full_id", "osm_id", "amenity", "description", "website", "addr:street"];

function FieldTable() {
  return (
    <div className="-ml-px flex h-[398px] border border-[#2a2a2a] bg-[#1e1e1e]">
      <div className="flex flex-1 flex-col overflow-hidden">
        <div className="flex h-[34px] shrink-0 bg-[#333] text-[22px] tracking-normal text-black">
          <div className="w-[189px] border-b-2 border-r-2 border-t border-b-[#2a2a2a] border-r-[#575757] border-t-[#555] bg-linear-to-b from-[#444] to-[#3a3a3a] text-center leading-[33px]">Name</div>
          <div className="w-[150px] whitespace-nowrap border-b-2 border-r-2 border-t border-b-[#2a2a2a] border-r-[#575757] border-t-[#555] bg-linear-to-b from-[#444] to-[#3a3a3a] pl-[7px] text-center leading-[33px]">Export name</div>
          <div className="w-[90px] border-b-2 border-t border-b-[#2a2a2a] border-t-[#555] bg-linear-to-b from-[#444] to-[#3a3a3a] text-center leading-[33px]">Type</div>
        </div>
        {fields.map((f) => (
          <div key={f} className="flex h-[60px] w-[429px] shrink-0 border-b border-[#2a2a2a] tracking-[0.25px]">
            <div className="flex w-[189px] items-center gap-[12px] border-r border-[#2a2a2a] pb-[4px] pl-[6px]">
              <Check on />
              <span className="pt-[2px]">{f}</span>
            </div>
            <div className="flex w-[150px] items-center border-r border-[#2a2a2a] pb-[2px] pl-[7px]">{f}</div>
            <div className="flex flex-1 items-center border-r border-[#2a2a2a] pb-[2px] pl-[7px] tracking-[0.7px]">String</div>
          </div>
        ))}
      </div>
      <VScroll thumb={290} />
    </div>
  );
}

function Dialog() {
  return (
    <div className="absolute left-[490px] top-[130px] flex h-[1320px] w-[1182px] flex-col overflow-hidden rounded-[20px] bg-[#323232] text-[25px] tracking-[0.2px] text-[#e0e0e0] shadow-[0_0_0_1px_#000,0_36px_80px_10px_rgba(0,0,0,0.5),0_0_40px_rgba(0,0,0,0.35)]">
      <div className="flex h-[56px] shrink-0 items-center border-b border-black bg-[#393937] pl-[16px] pr-[122px]">
        <div className="flex w-[106px] gap-[16px]">
          <span className="size-[24px] rounded-full bg-[#ee6a5f]" />
          <span className="size-[24px] rounded-full bg-[#5c5c5a]" />
          <span className="size-[24px] rounded-full bg-[#61c454]" />
        </div>
        <span className="flex-1 text-center text-[26px] font-bold tracking-[0.1px] text-[#b9b9b7]">Save Vector Layer as...</span>
      </div>

      <div className="grid shrink-0 grid-cols-[152px_1fr] gap-y-[12px] pl-[40px] pr-[40px] pt-[40px]">
        <div className="flex h-[48px] items-center pt-[2px]">Format</div>
        <div className="flex items-center px-[2px]"><Combo value="GeoJSON" className="flex-1" /></div>

        <div className="flex h-[48px] items-center pt-[2px]">File name</div>
        <div className="flex items-center justify-between">
          <div className="flex h-[48px] w-[892px] items-center rounded-[4px] border-2 border-[#2d4a6e] bg-[#1e1e1e] pl-[4px]">
            <span className="h-[32px] w-[2px] bg-white" />
          </div>
          <div className={`${RAISED} mr-[2px] h-[34px] w-[42px] justify-center text-[20px] text-black`}>...</div>
        </div>

        <div className="flex h-[48px] items-center whitespace-nowrap pt-[2px]">Layer name</div>
        <div className="h-[48px] rounded-[4px] border-2 border-[#262626] bg-[#1e1e1e]" />

        <div className="flex h-[48px] items-center pt-[2px]">CRS</div>
        <div className="flex items-center justify-between px-[2px]">
          <Combo value="EPSG:4326 - WGS 84" className="w-[890px] tracking-[0.5px]" />
          <div className={`${RAISED} h-[44px] w-[44px] justify-center`}>
            <svg width="32" height="32" viewBox="0 0 24 24">
              <circle cx="11" cy="13" r="8.4" fill="#dcebfa" stroke="#5b8fd0" strokeWidth="1" />
              <path d="M4 17h14M11 13v9M6 13q1 6 4 9M16 13q-1 6-4 9" stroke="#5b8fd0" strokeWidth=".7" fill="none" />
              <path d="M8 1.4h6.6L22 12.4H.6z" fill="#cfd3d6" stroke="#4a4a4a" strokeWidth=".6" />
              <path d="M6.4 4h10M4.6 7h13.6M2.4 10h18M10 1.4 7.6 12M13 1.4l2.4 11M11.3 1.4V12" stroke="#4a4a4a" strokeWidth=".6" />
              <rect x="12.4" y="13" width="10.6" height="10.6" rx="1.4" fill="#c9a60c" />
              <path d="M14.4 21.8l1-2.6 5-5 1.4 1.4-5 5z" fill="#fff" />
            </svg>
          </div>
        </div>
      </div>

      <div className="ml-[22px] mr-[24px] mt-[30px] flex h-[882px] shrink-0 overflow-hidden border border-[#292929]">
        <div className="flex flex-1 flex-col overflow-hidden pl-[19px] pr-[18px] pt-[20px]">
          <div className="flex h-[48px] shrink-0 items-center">
            <span className="w-[544px] shrink-0 pt-[2px]">Encoding</span>
            <Combo value="UTF-8" className="w-[524px]" disabled />
          </div>
          <div className="mt-[19px] shrink-0">
            <CheckRow faint>Save only selected features</CheckRow>
          </div>
          <div className="mt-[24px] shrink-0">
            <GroupHead>Select fields to export and their export options</GroupHead>
          </div>
          <div className="ml-[2px] mt-[6px] flex h-[561px] w-[1068px] shrink-0 flex-col rounded-[3px] border-2 border-[#3f3f3f] px-[21px] pt-[20px]">
            <FieldTable />
            <div className="mt-[15px] grid grid-cols-2 gap-[16px]">
              <Btn>Select All</Btn>
              <Btn>Deselect All</Btn>
            </div>
            <div className="mt-[21px]">
              <CheckRow>Use aliases for exported name</CheckRow>
            </div>
          </div>
          <div className="mt-[21px] shrink-0">
            <CheckRow on>Persist layer metadata</CheckRow>
          </div>
          <div className="mt-[24px] shrink-0">
            <GroupHead>Geometry</GroupHead>
          </div>
          <div className="ml-[2px] mt-[7px] flex h-[100px] w-[1068px] shrink-0 flex-col rounded-[3px] border-2 border-[#3f3f3f] pl-[540px] pr-[22px] pt-[21px]">
            <Combo value="" />
          </div>
        </div>
        <VScroll thumb={507} />
      </div>

      <div className="mt-[15px] flex shrink-0 items-center pl-[98px] pr-[24px]">
        <Btn className="w-[156px]">Help</Btn>
        <div className="flex-1" />
        <div className="w-[327px]">
          <CheckRow on>Add saved file to map</CheckRow>
        </div>
        <Btn className="w-[156px]">Cancel</Btn>
        <Btn className="ml-[16px] w-[156px]" disabled>OK</Btn>
      </div>
      <div className="pointer-events-none absolute inset-0 rounded-[20px] border-2 border-[#6a6a6a]/80" />
    </div>
  );
}

export default function App() {
  return (
    <div className="relative flex h-[1570px] w-[2100px] flex-col overflow-hidden bg-[#323232] font-['Inter','Liberation_Sans',sans-serif]">
      <Toolbars />
      <div className="flex min-h-0 flex-1">
        <aside className="flex w-[467px] shrink-0 bg-[#323232]">
          <div className="flex w-[459px] shrink-0 flex-col">
            <Browser />
            <Layers />
          </div>
          <div className="flex w-[8px] items-center pt-[26px]">
            <Dots n={6} layout="column" />
          </div>
        </aside>
        <main className="shrink-0 border-l border-black">
          <MapCanvas />
        </main>
      </div>
      <Dialog />
    </div>
  );
}
